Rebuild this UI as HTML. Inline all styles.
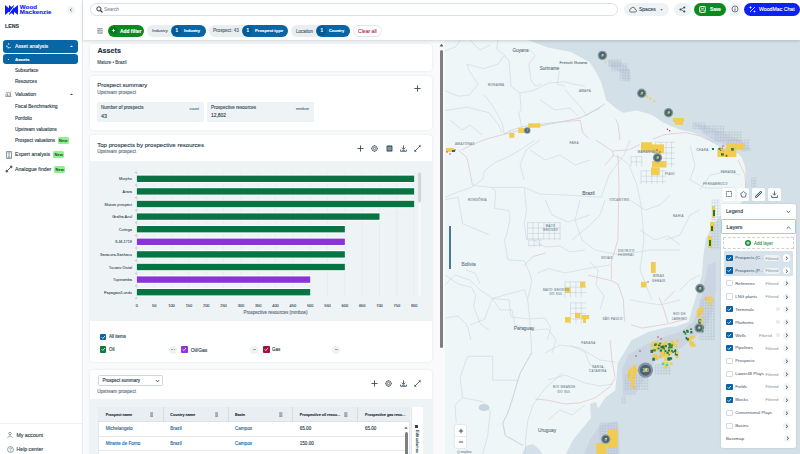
<!DOCTYPE html>
<html><head><meta charset="utf-8">
<style>
*{box-sizing:border-box;margin:0;padding:0}
html,body{width:800px;height:454px;overflow:hidden;background:#fff;font-family:"Liberation Sans",sans-serif;color:#1c3443}
.abs{position:absolute}
#side{position:absolute;left:0;top:0;width:83px;height:454px;background:#fff;border-right:1px solid #e3ebf0}
.t{position:absolute;white-space:nowrap;line-height:1;-webkit-text-stroke:0.12px currentColor}
.nav-main{position:absolute;left:3px;width:75px;height:12.5px;border-radius:3px}
.badge{position:absolute;background:#8ff08f;color:#1d3a2a;font-size:4px;font-weight:bold;border-radius:1.5px;height:7px;line-height:7px;padding:0 1.6px}
#hdr{position:absolute;left:83px;top:0;width:717px;height:40px;background:#fff;box-shadow:0 1px 3px rgba(0,0,0,.16)}
#col{position:absolute;left:83px;top:40px;width:362px;height:414px;background:#f9fafb}
.card{position:absolute;left:89.5px;width:342.5px;background:#fff;border-radius:3.5px;box-shadow:0 0 3px rgba(0,0,0,.09)}
#map{position:absolute;left:445px;top:40px;width:355px;height:414px;background:#eef4f6;overflow:hidden}
</style></head><body>

<div id="side">
  <!-- logo -->
  <svg class="abs" style="left:5px;top:5px" width="13" height="10" viewBox="0 0 13 10">
    <path d="M0 0 L4 3.2 L4 0 L6.5 2 L9 0 L9 3.2 L13 0 L13 10 L9 6.8 L9 10 L6.5 8 L4 10 L4 6.8 L0 10 Z" fill="#0a1dff"/>
    <path d="M3.2 9.5 L9.8 0.5" stroke="#fff" stroke-width="1"/>
  </svg>
  <div class="t" style="left:19.8px;top:3.8px;font-size:6.2px;font-weight:bold;color:#0a1dff;letter-spacing:0.05px">Wood</div><div class="t" style="left:19.8px;top:9.1px;font-size:6.2px;font-weight:bold;color:#0a1dff;letter-spacing:0.1px">Mackenzie</div>
  <div class="abs" style="left:67px;top:6px;width:8px;height:8px;border-radius:50%;background:#f1f4f6"></div>
  <svg class="abs" style="left:69px;top:8px" width="4" height="4" viewBox="0 0 4 4"><path d="M2.6 0.6 L1.2 2 L2.6 3.4" stroke="#34495a" stroke-width="0.8" fill="none"/></svg>
  <div class="t" style="left:5px;top:24.00px;font-size:5.3px;font-weight:bold;color:#2a3a44">LENS</div>

  <div class="nav-main" style="top:40px;background:#0866a6"></div>
  <svg class="abs" style="left:6px;top:43px" width="5" height="6" viewBox="0 0 5 6"><circle cx="2.6" cy="0.9" r="0.7" fill="#fff"/><circle cx="0.9" cy="3.2" r="0.7" fill="#fff"/><circle cx="2.2" cy="4.8" r="0.7" fill="#fff"/><circle cx="4.1" cy="4.6" r="0.7" fill="#fff"/></svg>
  <div class="t" style="left:15px;top:43.6px;font-size:5.2px;color:#fff">Asset analysis</div>
  <svg class="abs" style="left:70px;top:45px" width="3" height="2" viewBox="0 0 3 2"><path d="M0 2 L1.5 0.5 L3 2Z" fill="#fff"/></svg>
  <div class="nav-main" style="top:54px;height:9.5px;background:#0866a6"></div>
  <div class="abs" style="left:8px;top:58.5px;width:1px;height:1px;background:#fff"></div>
  <div class="t" style="left:15px;top:57.50px;font-size:4.4px;font-weight:bold;color:#fff">Assets</div>

  <div class="t" style="left:15px;top:68.80px;font-size:4.6px;color:#2d3e48">Subsurface</div>
  <div class="t" style="left:15px;top:79.50px;font-size:4.6px;color:#2d3e48">Resources</div>
  <svg class="abs" style="left:5px;top:91px" width="7" height="6" viewBox="0 0 7 6"><path d="M0.5 5.5 H6.5 M1 5 V3 M2.5 5 V2.5 M4 5 V3.5 M5.5 5 V2 M0.8 2.5 L3 1 L4.5 2 L6.3 0.5" stroke="#4d606c" stroke-width="0.6" fill="none"/></svg>
  <div class="t" style="left:15px;top:92.00px;font-size:5.2px;color:#2d3e48">Valuation</div>
  <svg class="abs" style="left:70px;top:93px" width="3" height="2" viewBox="0 0 3 2"><path d="M0 2 L1.5 0.5 L3 2Z" fill="#3a4a55"/></svg>
  <div class="t" style="left:15px;top:105.30px;font-size:4.6px;color:#2d3e48">Fiscal Benchmarking</div>
  <div class="t" style="left:15px;top:117.00px;font-size:4.6px;color:#2d3e48">Portfolio</div>
  <div class="t" style="left:15px;top:128.20px;font-size:4.6px;color:#2d3e48">Upstream valuations</div>
  <div class="t" style="left:15px;top:138.80px;font-size:4.6px;color:#2d3e48">Prospect valuations</div>
  <div class="badge" style="left:57.5px;top:137px">New</div>
  <svg class="abs" style="left:6px;top:151px" width="6" height="8" viewBox="0 0 6 8"><rect x="0.4" y="0.4" width="5.2" height="7.2" rx="0.6" stroke="#4d606c" stroke-width="0.7" fill="none"/><path d="M1.4 1.8 H4.6 M3 2.2 V6.6 M1.4 6.2 H4.6" stroke="#4d606c" stroke-width="0.6"/></svg>
  <div class="t" style="left:15px;top:151.6px;font-size:5.2px;color:#2d3e48">Expert analysis</div>
  <div class="badge" style="left:53px;top:151px">New</div>
  <svg class="abs" style="left:5px;top:164.5px" width="8" height="8" viewBox="0 0 8 8"><path d="M2 6 L6 2" stroke="#4d606c" stroke-width="0.9"/><path d="M1.8 4.6 L3.4 6.2 L1.8 7.8 L0.2 6.2Z M6.2 0.2 L7.8 1.8 L6.2 3.4 L4.6 1.8Z" fill="#4d606c"/></svg>
  <div class="t" style="left:15px;top:166.50px;font-size:5.2px;color:#2d3e48">Analogue finder</div>
  <div class="badge" style="left:54px;top:165.5px">New</div>

  <div class="abs" style="left:0;top:422.5px;width:82px;height:1px;background:#eef1f3"></div>
  <svg class="abs" style="left:7px;top:432px" width="6" height="6" viewBox="0 0 6 6"><circle cx="3" cy="1.6" r="1.2" stroke="#4d606c" stroke-width="0.6" fill="none"/><path d="M0.5 5.8 Q3 2 5.5 5.8" stroke="#4d606c" stroke-width="0.6" fill="none"/></svg>
  <div class="t" style="left:16.5px;top:432.60px;font-size:5.2px;color:#2d3e48">My account</div>
  <svg class="abs" style="left:6.5px;top:446px" width="7" height="7" viewBox="0 0 7 7"><circle cx="3.5" cy="3.5" r="2.9" stroke="#4d606c" stroke-width="0.6" fill="none"/><path d="M2.5 2.6 Q3.5 1.5 4.5 2.6 Q4.5 3.3 3.5 3.8 V4.4 M3.5 5.2 V5.6" stroke="#4d606c" stroke-width="0.6" fill="none"/></svg>
  <div class="t" style="left:16.5px;top:446.60px;font-size:5.2px;color:#2d3e48">Help center</div>
</div>

<div id="col"></div>
<div id="content">
  <div class="card" style="top:43.7px;height:27px"></div>
  <div class="t" style="left:97.4px;top:47.20px;font-size:7.2px;font-weight:bold;color:#162f3e">Assets</div>
  <div class="t" style="left:97.2px;top:60.50px;font-size:4.5px;color:#3a4d59">Mature • Brazil</div>

  <div class="card" style="top:75.6px;height:54.4px"></div>
  <div class="t" style="left:97.2px;top:81.5px;font-size:6px;color:#253b49">Prospect summary</div>
  <div class="t" style="left:97.2px;top:90.50px;font-size:4.6px;color:#5e7482">Upstream prospect</div>
  <svg class="abs" style="left:414px;top:85px" width="7" height="7" viewBox="0 0 7 7"><path d="M3.5 0.3 V6.7 M0.3 3.5 H6.7" stroke="#23394a" stroke-width="0.8"/></svg>
  <div class="abs" style="left:97.2px;top:101.7px;width:107px;height:20px;background:#eef3f6;border-radius:1px"></div>
  <div class="t" style="left:101px;top:105.80px;font-size:4.6px;color:#3a4d59">Number of prospects</div>
  <div class="t" style="left:189.5px;top:106.50px;font-size:3.9px;color:#5e7482">count</div>
  <div class="t" style="left:101px;top:113.50px;font-size:5.4px;color:#253b49">43</div>
  <div class="abs" style="left:207px;top:101.7px;width:106.6px;height:20px;background:#eef3f6;border-radius:1px"></div>
  <div class="t" style="left:211px;top:105.80px;font-size:4.55px;color:#3a4d59">Prospective resources</div>
  <div class="t" style="left:296px;top:106.50px;font-size:3.9px;color:#5e7482">mmboe</div>
  <div class="t" style="left:211px;top:113.50px;font-size:4.9px;color:#253b49">12,802</div>

  <div class="card" style="top:135.3px;height:227px;overflow:hidden">
    <div class="abs" style="left:0;top:25.7px;width:100%;height:160.3px;background:#eef3f6"></div>
  </div>
  <div class="t" style="left:97.2px;top:142.20px;font-size:6.07px;color:#253b49">Top prospects by prospective resources</div>
  <div class="t" style="left:97.2px;top:150.30px;font-size:4.6px;color:#5e7482">Upstream prospect</div>
  <svg class="abs" style="left:356.90px;top:144.70px" width="7" height="7" viewBox="0 0 7 7"><path d="M3.5 0.4 V6.6 M0.4 3.5 H6.6" stroke="#2d4556" stroke-width="0.85"/></svg>
<svg class="abs" style="left:371.00px;top:144.70px" width="7" height="7" viewBox="0 0 7 7"><circle cx="3.5" cy="3.5" r="2.7" stroke="#2d4556" stroke-width="0.8" fill="none"/><circle cx="3.5" cy="3.5" r="1.2" stroke="#2d4556" stroke-width="0.7" fill="none"/><path d="M3.5 0 V0.9 M3.5 6.1 V7 M0 3.5 H0.9 M6.1 3.5 H7" stroke="#2d4556" stroke-width="0.6"/></svg>
<svg class="abs" style="left:385.70px;top:144.70px" width="7" height="7" viewBox="0 0 7 7"><rect x="0.6" y="0.5" width="5.8" height="6" rx="0.5" fill="#2d4556"/><rect x="1.4" y="1.6" width="4.2" height="3.9" fill="#8495a0"/></svg>
<svg class="abs" style="left:399.60px;top:144.70px" width="7" height="7" viewBox="0 0 7 7"><path d="M3.5 0.3 V4" stroke="#2d4556" stroke-width="0.8"/><path d="M1.8 2.6 L3.5 4.4 L5.2 2.6" stroke="#2d4556" stroke-width="0.8" fill="none"/><path d="M0.6 4.6 V6.3 H6.4 V4.6" stroke="#2d4556" stroke-width="0.8" fill="none"/><path d="M2 5.3 H5" stroke="#2d4556" stroke-width="0.7"/></svg>
<svg class="abs" style="left:414.00px;top:144.70px" width="7" height="7" viewBox="0 0 7 7"><path d="M1 6 L6 1" stroke="#2d4556" stroke-width="0.8"/><path d="M0.3 6.7 L0.6 4.4 L2.6 6.4Z M6.7 0.3 L6.4 2.6 L4.4 0.6Z" fill="#2d4556"/></svg>
  <svg class="abs" style="left:0;top:0" width="800" height="454" viewBox="0 0 800 454">
<path d="M136.90 172 V297.5" stroke="#dfe5e9" stroke-width="0.5"/>
<path d="M154.23 172 V297.5" stroke="#dfe5e9" stroke-width="0.5"/>
<path d="M171.56 172 V297.5" stroke="#dfe5e9" stroke-width="0.5"/>
<path d="M188.89 172 V297.5" stroke="#dfe5e9" stroke-width="0.5"/>
<path d="M206.22 172 V297.5" stroke="#dfe5e9" stroke-width="0.5"/>
<path d="M223.55 172 V297.5" stroke="#dfe5e9" stroke-width="0.5"/>
<path d="M240.88 172 V297.5" stroke="#dfe5e9" stroke-width="0.5"/>
<path d="M258.21 172 V297.5" stroke="#dfe5e9" stroke-width="0.5"/>
<path d="M275.54 172 V297.5" stroke="#dfe5e9" stroke-width="0.5"/>
<path d="M292.87 172 V297.5" stroke="#dfe5e9" stroke-width="0.5"/>
<path d="M310.20 172 V297.5" stroke="#dfe5e9" stroke-width="0.5"/>
<path d="M327.53 172 V297.5" stroke="#dfe5e9" stroke-width="0.5"/>
<path d="M344.86 172 V297.5" stroke="#dfe5e9" stroke-width="0.5"/>
<path d="M362.19 172 V297.5" stroke="#dfe5e9" stroke-width="0.5"/>
<path d="M379.52 172 V297.5" stroke="#dfe5e9" stroke-width="0.5"/>
<path d="M396.85 172 V297.5" stroke="#dfe5e9" stroke-width="0.5"/>
<path d="M414.18 172 V297.5" stroke="#dfe5e9" stroke-width="0.5"/>
<path d="M135 172.40 H137" stroke="#8a969e" stroke-width="0.5"/>
<path d="M135 185.00 H137" stroke="#8a969e" stroke-width="0.5"/>
<path d="M135 197.60 H137" stroke="#8a969e" stroke-width="0.5"/>
<path d="M135 210.20 H137" stroke="#8a969e" stroke-width="0.5"/>
<path d="M135 222.80 H137" stroke="#8a969e" stroke-width="0.5"/>
<path d="M135 235.40 H137" stroke="#8a969e" stroke-width="0.5"/>
<path d="M135 248.00 H137" stroke="#8a969e" stroke-width="0.5"/>
<path d="M135 260.60 H137" stroke="#8a969e" stroke-width="0.5"/>
<path d="M135 273.20 H137" stroke="#8a969e" stroke-width="0.5"/>
<path d="M135 285.80 H137" stroke="#8a969e" stroke-width="0.5"/>
<path d="M135 298.40 H137" stroke="#8a969e" stroke-width="0.5"/>
<path d="M136.9 172 V298" stroke="#c9d2d8" stroke-width="0.5"/>
<rect x="136.5" y="174.60" width="278.08" height="8.4" fill="#fff"/>
<rect x="136.9" y="175.60" width="277.28" height="6.4" fill="#087443"/>
<rect x="136.5" y="187.20" width="278.08" height="8.4" fill="#fff"/>
<rect x="136.9" y="188.20" width="277.28" height="6.4" fill="#087443"/>
<rect x="136.5" y="199.80" width="278.08" height="8.4" fill="#fff"/>
<rect x="136.9" y="200.80" width="277.28" height="6.4" fill="#087443"/>
<rect x="136.5" y="212.40" width="243.42" height="8.4" fill="#fff"/>
<rect x="136.9" y="213.40" width="242.62" height="6.4" fill="#087443"/>
<rect x="136.5" y="225.00" width="208.76" height="8.4" fill="#fff"/>
<rect x="136.9" y="226.00" width="207.96" height="6.4" fill="#087443"/>
<rect x="136.5" y="237.60" width="208.76" height="8.4" fill="#fff"/>
<rect x="136.9" y="238.60" width="207.96" height="6.4" fill="#8a34d8"/>
<rect x="136.5" y="250.20" width="208.76" height="8.4" fill="#fff"/>
<rect x="136.9" y="251.20" width="207.96" height="6.4" fill="#087443"/>
<rect x="136.5" y="262.80" width="208.76" height="8.4" fill="#fff"/>
<rect x="136.9" y="263.80" width="207.96" height="6.4" fill="#087443"/>
<rect x="136.5" y="275.40" width="174.10" height="8.4" fill="#fff"/>
<rect x="136.9" y="276.40" width="173.30" height="6.4" fill="#8a34d8"/>
<rect x="136.5" y="288.00" width="174.10" height="8.4" fill="#fff"/>
<rect x="136.9" y="289.00" width="173.30" height="6.4" fill="#087443"/>
<rect x="417.6" y="172" width="4.2" height="125.8" rx="2" fill="#f6f8f9" stroke="#e1e6e9" stroke-width="0.4"/>
<rect x="418.2" y="172.5" width="2.8" height="30" rx="1.4" fill="#cfd4d7"/>
</svg>
<div class="t" style="right:668px;top:178.40px;font-size:3.85px;color:#2b3f4c;-webkit-text-stroke:0.05px">Morpho</div>
<div class="t" style="right:668px;top:191.00px;font-size:3.85px;color:#2b3f4c;-webkit-text-stroke:0.05px">Arara</div>
<div class="t" style="right:668px;top:203.60px;font-size:3.85px;color:#2b3f4c;-webkit-text-stroke:0.05px">Mutum prospect</div>
<div class="t" style="right:668px;top:216.20px;font-size:3.85px;color:#2b3f4c;-webkit-text-stroke:0.05px">Gralha Azul</div>
<div class="t" style="right:668px;top:228.80px;font-size:3.85px;color:#2b3f4c;-webkit-text-stroke:0.05px">Cotinga</div>
<div class="t" style="right:668px;top:241.40px;font-size:3.85px;color:#2b3f4c;-webkit-text-stroke:0.05px">S-M-1719</div>
<div class="t" style="right:668px;top:254.00px;font-size:3.85px;color:#2b3f4c;-webkit-text-stroke:0.05px">Saracura-Sanhacu</div>
<div class="t" style="right:668px;top:266.60px;font-size:3.85px;color:#2b3f4c;-webkit-text-stroke:0.05px">Tucano Distal</div>
<div class="t" style="right:668px;top:279.20px;font-size:3.85px;color:#2b3f4c;-webkit-text-stroke:0.05px">Tupinamba</div>
<div class="t" style="right:668px;top:291.80px;font-size:3.85px;color:#2b3f4c;-webkit-text-stroke:0.05px">Papagaio/Lundu</div>
<div class="t" style="left:126.90px;width:20px;text-align:center;top:303.5px;font-size:3.9px;color:#3f525e">0</div>
<div class="t" style="left:144.23px;width:20px;text-align:center;top:303.5px;font-size:3.9px;color:#3f525e">50</div>
<div class="t" style="left:161.56px;width:20px;text-align:center;top:303.5px;font-size:3.9px;color:#3f525e">100</div>
<div class="t" style="left:178.89px;width:20px;text-align:center;top:303.5px;font-size:3.9px;color:#3f525e">150</div>
<div class="t" style="left:196.22px;width:20px;text-align:center;top:303.5px;font-size:3.9px;color:#3f525e">200</div>
<div class="t" style="left:213.55px;width:20px;text-align:center;top:303.5px;font-size:3.9px;color:#3f525e">250</div>
<div class="t" style="left:230.88px;width:20px;text-align:center;top:303.5px;font-size:3.9px;color:#3f525e">300</div>
<div class="t" style="left:248.21px;width:20px;text-align:center;top:303.5px;font-size:3.9px;color:#3f525e">350</div>
<div class="t" style="left:265.54px;width:20px;text-align:center;top:303.5px;font-size:3.9px;color:#3f525e">400</div>
<div class="t" style="left:282.87px;width:20px;text-align:center;top:303.5px;font-size:3.9px;color:#3f525e">450</div>
<div class="t" style="left:300.20px;width:20px;text-align:center;top:303.5px;font-size:3.9px;color:#3f525e">500</div>
<div class="t" style="left:317.53px;width:20px;text-align:center;top:303.5px;font-size:3.9px;color:#3f525e">550</div>
<div class="t" style="left:334.86px;width:20px;text-align:center;top:303.5px;font-size:3.9px;color:#3f525e">600</div>
<div class="t" style="left:352.19px;width:20px;text-align:center;top:303.5px;font-size:3.9px;color:#3f525e">650</div>
<div class="t" style="left:369.52px;width:20px;text-align:center;top:303.5px;font-size:3.9px;color:#3f525e">700</div>
<div class="t" style="left:386.85px;width:20px;text-align:center;top:303.5px;font-size:3.9px;color:#3f525e">750</div>
<div class="t" style="left:404.18px;width:20px;text-align:center;top:303.5px;font-size:3.9px;color:#3f525e">800</div>
<div class="t" style="left:235px;width:81px;text-align:center;top:311.00px;font-size:4.5px;color:#5b6e7a">Prospective resources (mmboe)</div>
  <div class="abs" style="left:99.8px;top:333.5px;width:6.6px;height:6.4px;border-radius:1px;background:#0a63a8"></div><svg class="abs" style="left:99.8px;top:333.5px" width="6.6" height="6.4" viewBox="0 0 6.6 6.4"><path d="M1.6 3.3 L2.8 4.5 L5 2" stroke="#fff" stroke-width="0.8" fill="none"/></svg>
<div class="t" style="left:108.9px;top:335.00px;font-size:4.5px;color:#253b49">All items</div>
<div class="abs" style="left:99.8px;top:346.2px;width:6.6px;height:6.4px;border-radius:1px;background:#0b7a3e"></div><svg class="abs" style="left:99.8px;top:346.2px" width="6.6" height="6.4" viewBox="0 0 6.6 6.4"><path d="M1.6 3.3 L2.8 4.5 L5 2" stroke="#fff" stroke-width="0.8" fill="none"/></svg>
<div class="t" style="left:108.9px;top:348.20px;font-size:4.5px;color:#253b49">Oil</div>
<div class="abs" style="left:168.6px;top:345.5px;width:8px;height:8px;border-radius:50%;background:#eef2f4"></div><div class="abs" style="left:170.95px;top:349.15px;width:0.7px;height:0.7px;border-radius:50%;background:#8d99a2"></div><div class="abs" style="left:172.25px;top:349.15px;width:0.7px;height:0.7px;border-radius:50%;background:#8d99a2"></div><div class="abs" style="left:173.55px;top:349.15px;width:0.7px;height:0.7px;border-radius:50%;background:#8d99a2"></div>
<div class="abs" style="left:181.4px;top:346.2px;width:6.6px;height:6.4px;border-radius:1px;background:#8f35e0"></div><svg class="abs" style="left:181.4px;top:346.2px" width="6.6" height="6.4" viewBox="0 0 6.6 6.4"><path d="M1.6 3.3 L2.8 4.5 L5 2" stroke="#fff" stroke-width="0.8" fill="none"/></svg>
<div class="t" style="left:190.7px;top:348.20px;font-size:5px;color:#253b49">Oil/Gas</div>
<div class="abs" style="left:250.4px;top:345.5px;width:8px;height:8px;border-radius:50%;background:#eef2f4"></div><div class="abs" style="left:252.75px;top:349.15px;width:0.7px;height:0.7px;border-radius:50%;background:#8d99a2"></div><div class="abs" style="left:254.05px;top:349.15px;width:0.7px;height:0.7px;border-radius:50%;background:#8d99a2"></div><div class="abs" style="left:255.35px;top:349.15px;width:0.7px;height:0.7px;border-radius:50%;background:#8d99a2"></div>
<div class="abs" style="left:263px;top:346.2px;width:6.6px;height:6.4px;border-radius:1px;background:#a3123a"></div><svg class="abs" style="left:263px;top:346.2px" width="6.6" height="6.4" viewBox="0 0 6.6 6.4"><path d="M1.6 3.3 L2.8 4.5 L5 2" stroke="#fff" stroke-width="0.8" fill="none"/></svg>
<div class="t" style="left:272px;top:348.20px;font-size:4.5px;color:#253b49">Gas</div>
<div class="abs" style="left:332.3px;top:345.5px;width:8px;height:8px;border-radius:50%;background:#eef2f4"></div><div class="abs" style="left:334.65px;top:349.15px;width:0.7px;height:0.7px;border-radius:50%;background:#8d99a2"></div><div class="abs" style="left:335.95px;top:349.15px;width:0.7px;height:0.7px;border-radius:50%;background:#8d99a2"></div><div class="abs" style="left:337.25px;top:349.15px;width:0.7px;height:0.7px;border-radius:50%;background:#8d99a2"></div>

  <div class="card" style="top:369.6px;height:100px;overflow:hidden">
    <div class="abs" style="left:0;top:29.6px;width:100%;height:80px;background:#eef3f6"></div>
  </div>
  <div class="abs" style="left:97.6px;top:374.7px;width:65px;height:11.3px;border:0.6px solid #cdd7dd;border-radius:1.5px;background:#fff"></div>
<div class="t" style="left:102.5px;top:379px;font-size:4.5px;color:#253b49">Prospect summary</div>
<svg class="abs" style="left:154.5px;top:378.8px" width="5" height="4" viewBox="0 0 5 4"><path d="M0.8 1 L2.5 2.8 L4.2 1" stroke="#253b49" stroke-width="0.8" fill="none"/></svg>
<div class="t" style="left:97.2px;top:389.60px;font-size:4.6px;color:#5e7482">Upstream prospect</div>
<svg class="abs" style="left:371.20px;top:380.30px" width="7" height="7" viewBox="0 0 7 7"><path d="M3.5 0.4 V6.6 M0.4 3.5 H6.6" stroke="#2d4556" stroke-width="0.85"/></svg>
<svg class="abs" style="left:385.40px;top:380.30px" width="7" height="7" viewBox="0 0 7 7"><circle cx="3.5" cy="3.5" r="2.7" stroke="#2d4556" stroke-width="0.8" fill="none"/><circle cx="3.5" cy="3.5" r="1.2" stroke="#2d4556" stroke-width="0.7" fill="none"/><path d="M3.5 0 V0.9 M3.5 6.1 V7 M0 3.5 H0.9 M6.1 3.5 H7" stroke="#2d4556" stroke-width="0.6"/></svg>
<svg class="abs" style="left:399.50px;top:380.30px" width="7" height="7" viewBox="0 0 7 7"><path d="M3.5 0.3 V4" stroke="#2d4556" stroke-width="0.8"/><path d="M1.8 2.6 L3.5 4.4 L5.2 2.6" stroke="#2d4556" stroke-width="0.8" fill="none"/><path d="M0.6 4.6 V6.3 H6.4 V4.6" stroke="#2d4556" stroke-width="0.8" fill="none"/><path d="M2 5.3 H5" stroke="#2d4556" stroke-width="0.7"/></svg>
<svg class="abs" style="left:413.80px;top:380.30px" width="7" height="7" viewBox="0 0 7 7"><path d="M1 6 L6 1" stroke="#2d4556" stroke-width="0.8"/><path d="M0.3 6.7 L0.6 4.4 L2.6 6.4Z M6.7 0.3 L6.4 2.6 L4.4 0.6Z" fill="#2d4556"/></svg>
<div class="abs" style="left:97.6px;top:407px;width:312.4px;height:50px;background:#fff;border:0.5px solid #e1e8ec"></div>
<div class="abs" style="left:97.6px;top:407px;width:312.4px;height:15px;background:#e8eef1;border-bottom:0.5px solid #dbe3e8"></div>
<div class="abs" style="left:162.5px;top:407px;width:0.5px;height:15px;background:#d5dee3"></div>
<div class="abs" style="left:227.6px;top:407px;width:0.5px;height:15px;background:#d5dee3"></div>
<div class="abs" style="left:292px;top:407px;width:0.5px;height:15px;background:#d5dee3"></div>
<div class="abs" style="left:356.6px;top:407px;width:0.5px;height:15px;background:#d5dee3"></div>
<div class="abs" style="left:97.6px;top:435.9px;width:307px;height:0.6px;background:#e3e9ed"></div>
<div class="abs" style="left:97.6px;top:450.2px;width:307px;height:0.6px;background:#e3e9ed"></div>
<div class="t" style="left:105.7px;top:413.50px;font-size:3.7px;font-weight:bold;color:#1d3240">Prospect name</div>
<svg class="abs" style="left:149.7px;top:412px" width="3.6" height="5" viewBox="0 0 3.6 5"><path d="M0.2 0.8 H3.4 M0.2 2.0 H3.4 M0.2 3.2 H3.4 M0.2 4.4 H3.4" stroke="#3d5260" stroke-width="0.55"/></svg>
<div class="t" style="left:170.3px;top:413.50px;font-size:3.7px;font-weight:bold;color:#1d3240">Country name</div>
<svg class="abs" style="left:214.5px;top:412px" width="3.6" height="5" viewBox="0 0 3.6 5"><path d="M0.2 0.8 H3.4 M0.2 2.0 H3.4 M0.2 3.2 H3.4 M0.2 4.4 H3.4" stroke="#3d5260" stroke-width="0.55"/></svg>
<div class="t" style="left:235px;top:413.50px;font-size:3.7px;font-weight:bold;color:#1d3240">Basin</div>
<svg class="abs" style="left:279.2px;top:412px" width="3.6" height="5" viewBox="0 0 3.6 5"><path d="M0.2 0.8 H3.4 M0.2 2.0 H3.4 M0.2 3.2 H3.4 M0.2 4.4 H3.4" stroke="#3d5260" stroke-width="0.55"/></svg>
<div class="t" style="left:299.8px;top:413.50px;font-size:3.7px;font-weight:bold;color:#1d3240">Prospective oil resou...</div>
<svg class="abs" style="left:344.09999999999997px;top:412px" width="3.6" height="5" viewBox="0 0 3.6 5"><path d="M0.2 0.8 H3.4 M0.2 2.0 H3.4 M0.2 3.2 H3.4 M0.2 4.4 H3.4" stroke="#3d5260" stroke-width="0.55"/></svg>
<div class="t" style="left:365px;top:413.50px;font-size:3.7px;font-weight:bold;color:#1d3240">Prospective gas reso...</div>
<div class="t" style="left:105.7px;top:427.30px;font-size:4.55px;color:#1c6aa6">Michelangelo</div>
<div class="t" style="left:170.3px;top:427.30px;font-size:4.55px;color:#1c6aa6">Brazil</div>
<div class="t" style="left:235px;top:427.30px;font-size:4.55px;color:#1c6aa6">Campos</div>
<div class="t" style="left:299.8px;top:427.30px;font-size:4.55px;color:#253b49">65.00</div>
<div class="t" style="left:365px;top:427.30px;font-size:4.55px;color:#253b49">65.00</div>
<div class="t" style="left:105.7px;top:441.50px;font-size:4.55px;color:#1c6aa6">Mirante de Forno</div>
<div class="t" style="left:170.3px;top:441.50px;font-size:4.55px;color:#1c6aa6">Brazil</div>
<div class="t" style="left:235px;top:441.50px;font-size:4.55px;color:#1c6aa6">Campos</div>
<div class="t" style="left:299.8px;top:441.50px;font-size:4.55px;color:#253b49">150.00</div>
<div class="t" style="left:365px;top:441.0px;font-size:4.3px;color:#253b49"></div>
<div class="abs" style="left:404.8px;top:432px;width:3.2px;height:30px;border-radius:1.6px;background:#7d7f80"></div>
<svg class="abs" style="left:404.4px;top:425.5px" width="4" height="3" viewBox="0 0 4 3"><path d="M0.3 2.7 L2 0.4 L3.7 2.7Z" fill="#5f6163"/></svg>
<div class="abs" style="left:411px;top:407px;width:12px;height:50px;background:#fff;border-left:0.5px solid #e1e8ec"></div>
<div class="abs" style="left:415px;top:425px;width:3px;height:3px;background:#2d4556"></div>
<div class="t" style="left:419px;top:430px;font-size:4px;color:#253b49;transform-origin:0 0;transform:rotate(90deg)">Edit columns</div>

  <div class="abs" style="left:439.5px;top:50px;width:3.6px;height:297.5px;border-radius:2px;background:#7d7f80"></div>
  <svg class="abs" style="left:439px;top:43px" width="5" height="4" viewBox="0 0 5 4"><path d="M0.5 3.5 L2.5 0.8 L4.5 3.5Z" fill="#5f6163"/></svg>
</div>
<div id="map">
<svg width="355" height="414" viewBox="445 40 355 414" style="position:absolute;left:0;top:0">
<rect x="445" y="40" width="355" height="414" fill="#eef6f8"/>
<path d="M528.0 40.0 L548.0 47.5 L571.0 52.0 L582.0 58.0 L590.0 62.5 L596.0 72.0 L601.0 82.0 L604.0 92.0 L606.0 100.0 L612.0 105.0 L618.0 110.0 L623.5 112.8 L637.0 110.5 L652.0 115.0 L663.0 122.5 L680.0 129.7 L691.0 132.0 L702.0 136.3 L713.0 143.0 L724.0 149.6 L737.3 152.9 L741.7 157.3 L745.0 166.0 L746.0 177.0 L745.0 188.0 L743.9 200.0 L737.0 207.0 L722.0 214.0 L713.0 225.0 L706.0 238.0 L703.5 255.0 L702.5 268.0 L701.5 276.0 L699.4 284.0 L696.0 297.0 L691.7 310.5 L688.8 322.0 L676.0 326.5 L665.8 327.6 L648.2 332.0 L635.9 338.2 L631.6 340.0 L622.8 355.0 L617.8 362.6 L616.5 377.7 L615.3 390.3 L605.2 397.8 L595.2 412.9 L582.6 428.0 L572.5 440.5 L566.0 454.0 L800.0 454.0 L800.0 40.0Z" fill="#d3e0e7"/>
<path d="M623.0 395.0 L622.0 370.0 L628.0 355.0 L645.0 345.0 L660.0 338.0 L680.0 332.0 L693.0 322.0 L700.0 305.0 L704.0 285.0 L708.0 265.0 L716.0 262.0 L716.0 290.0 L713.0 310.0 L706.0 326.0 L692.0 340.0 L672.0 354.0 L655.0 361.0 L645.0 378.0 L635.0 395.0Z" fill="#c9d2e1" opacity="0.8"/>
<path d="M584.0 454.0 L590.0 440.0 L600.0 425.0 L618.0 421.0 L620.0 454.0Z" fill="#c9d2e1" opacity="0.8"/>
<path d="M693.0 123.0 L706.0 126.0 L742.0 141.0 L752.0 150.0 L744.0 152.0 L712.0 140.0 L700.0 130.0Z" fill="#c9d2e1" opacity="0.8"/>
<path d="M607.0 60.0 L620.0 61.0 L630.0 70.0 L631.0 82.0 L623.0 81.0 L621.0 72.0 L609.0 66.0Z" fill="#c9d2e1" opacity="0.8"/>
<path d="M522.0 454.0 L526.0 446.0 L533.0 444.0 L540.0 450.0 L542.0 454.0Z" fill="#d3e0e7"/>
<path d="M590.0 404.0 L596.0 402.0 L599.0 412.0 L596.0 423.0 L591.0 418.0Z" fill="#d3e0e7"/>
<ellipse cx="484" cy="407.5" rx="5.5" ry="3.5" fill="#c9d5dd"/>
<path d="M497.9 40.0 L496.8 48.8 L504.5 55.4 L508.9 60.9 L510.0 73.0 L511.0 86.3 L519.9 92.9 L533.0 90.7 L548.5 83.0 L565.0 81.8 L573.0 84.0 L585.0 86.0" stroke="#c4d4dc" stroke-width="0.55" fill="none"/>
<path d="M445.0 90.7 L458.2 96.2 L469.2 95.0 L478.0 84.0 L469.2 70.8 L467.0 64.2 L483.5 68.6 L497.9 64.2 L504.5 55.4" stroke="#c4d4dc" stroke-width="0.55" fill="none"/>
<path d="M445.0 51.0 L456.0 46.6 L460.4 40.0" stroke="#c4d4dc" stroke-width="0.55" fill="none"/>
<path d="M528.7 48.8 L535.3 55.4 L528.7 64.2 L530.9 79.6 L535.3 86.3 L541.9 84.0" stroke="#c4d4dc" stroke-width="0.55" fill="none"/>
<path d="M559.5 70.8 L557.3 84.0 L565.0 86.3" stroke="#c4d4dc" stroke-width="0.55" fill="none"/>
<path d="M519.9 92.9 L521.0 110.5 L518.6 112.7 L522.0 128.0" stroke="#c4d4dc" stroke-width="0.55" fill="none"/>
<path d="M484.6 95.0 L491.3 103.9 L496.8 112.7 L502.3 123.7 L504.5 134.7" stroke="#c4d4dc" stroke-width="0.55" fill="none"/>
<path d="M445.0 110.5 L467.0 107.2 L489.0 112.7 L497.9 123.7 L502.3 132.5" stroke="#c4d4dc" stroke-width="0.55" fill="none"/>
<path d="M565.0 89.6 L573.8 99.5 L581.5 108.3 L587.0 116.0" stroke="#c4d4dc" stroke-width="0.55" fill="none"/>
<path d="M445.0 197.3 L458.2 191.8 L471.4 187.4 L482.4 179.6 L484.6 170.8 L495.7 162.0 L506.7 157.6 L520.0 150.0 L535.0 140.0" stroke="#c4d4dc" stroke-width="0.55" fill="none"/>
<path d="M472.5 185.2 L491.3 187.4 L524.3 187.4 L539.7 194.0 L565.0 195.0 L601.3 197.3" stroke="#c4d4dc" stroke-width="0.55" fill="none"/>
<path d="M491.3 187.4 L495.7 190.7 L494.6 208.3 L508.9 210.5 L510.0 219.3 L506.7 234.7 L504.5 240.0 L507.8 259.8 L524.3 260.9 L528.7 270.8 L532.0 280.7 L527.6 299.5 L529.8 319.3 L531.7 352.6 L520.4 372.7 L517.9 380.2 L512.8 397.8 L507.8 412.9 L502.8 422.9 L505.3 435.5 L522.9 445.5" stroke="#c4d4dc" stroke-width="0.55" fill="none"/>
<path d="M524.3 187.4 L526.5 210.5 L524.3 223.7 L526.5 240.0" stroke="#c4d4dc" stroke-width="0.55" fill="none"/>
<path d="M445.0 199.5 L458.2 197.3 L460.4 210.5 L462.6 223.7 L489.0 234.7" stroke="#c4d4dc" stroke-width="0.55" fill="none"/>
<path d="M524.3 180.0 L520.0 165.0 L526.0 150.0 L540.0 140.0" stroke="#c4d4dc" stroke-width="0.55" fill="none"/>
<path d="M601.3 197.3 L609.0 175.0 L624.0 155.0 L630.0 140.0" stroke="#c4d4dc" stroke-width="0.55" fill="none"/>
<path d="M612.0 155.0 L621.0 158.0 L629.0 165.0 L637.0 185.0 L641.0 205.0 L644.0 240.0 L640.0 270.0 L652.0 300.0" stroke="#c4d4dc" stroke-width="0.55" fill="none"/>
<path d="M492.4 298.4 L524.3 289.6 L527.6 299.5" stroke="#c4d4dc" stroke-width="0.55" fill="none"/>
<path d="M492.4 298.4 L484.6 319.3 L470.0 325.0" stroke="#c4d4dc" stroke-width="0.55" fill="none"/>
<path d="M537.5 273.0 L548.5 268.6 L565.0 273.0 L590.0 268.0 L610.0 265.0" stroke="#c4d4dc" stroke-width="0.55" fill="none"/>
<path d="M467.6 356.3 L492.7 356.3 L492.7 380.2 L517.9 380.2" stroke="#c4d4dc" stroke-width="0.55" fill="none"/>
<path d="M467.6 356.3 L460.0 377.7 L462.6 397.8 L455.0 405.3 L456.3 422.9" stroke="#c4d4dc" stroke-width="0.55" fill="none"/>
<path d="M462.6 397.8 L482.7 401.6 L490.2 411.6 L487.7 435.5 L482.7 454.0" stroke="#c4d4dc" stroke-width="0.55" fill="none"/>
<path d="M563.0 372.7 L545.5 387.7 L532.9 405.3 L527.9 420.4 L525.4 440.5 L525.4 454.0" stroke="#c4d4dc" stroke-width="0.55" fill="none"/>
<path d="M492.0 298.0 L500.0 310.0 L512.0 310.0 L515.0 325.0 L533.0 330.0 L548.0 329.0 L556.0 340.0 L552.0 353.0" stroke="#c4d4dc" stroke-width="0.55" fill="none"/>
<path d="M545.0 353.0 L560.0 345.0 L580.0 348.0 L600.0 360.0 L615.0 362.0" stroke="#c4d4dc" stroke-width="0.55" fill="none"/>
<path d="M548.0 380.0 L565.0 375.0 L585.0 383.0 L600.0 386.0 L612.0 384.0" stroke="#c4d4dc" stroke-width="0.55" fill="none"/>
<path d="M445.0 285.0 L455.0 275.0 L470.0 280.0 L480.0 290.0 L492.0 298.0" stroke="#c4d4dc" stroke-width="0.55" fill="none"/>
<path d="M665.0 240.0 L680.0 235.0 L690.0 215.0 L700.0 210.0" stroke="#c4d4dc" stroke-width="0.55" fill="none"/>
<path d="M572.0 240.0 L590.0 225.0 L600.0 215.0 L605.0 200.0" stroke="#c4d4dc" stroke-width="0.55" fill="none"/>
<path d="M680.0 290.0 L690.0 280.0 L700.0 275.0" stroke="#c4d4dc" stroke-width="0.55" fill="none"/>
<path d="M580.0 200.0 L575.0 220.0 L582.0 240.0 L595.0 250.0 L620.0 255.0 L650.0 250.0 L680.0 250.0" stroke="#c4d4dc" stroke-width="0.55" fill="none"/>
<path d="M700.0 190.0 L710.0 175.0 L725.0 172.0 L740.0 175.0" stroke="#c4d4dc" stroke-width="0.55" fill="none"/>
<path d="M690.0 145.0 L695.0 165.0 L690.0 180.0 L705.0 188.0 L735.0 188.0" stroke="#c4d4dc" stroke-width="0.55" fill="none"/>
<path d="M630.0 300.0 L660.0 305.0 L680.0 300.0" stroke="#c4d4dc" stroke-width="0.55" fill="none"/>
<path d="M445.0 275.2 L458.2 284.0 L471.4 287.4 L475.8 295.0 L473.6 306.0 L480.2 323.7 L489.0 330.3" stroke="#c4d4dc" stroke-width="0.55" fill="none"/>
<path d="M492.4 298.4 L509.0 300.0 L511.0 317.0 L529.0 319.0 L545.0 318.0 L551.0 328.0 L547.0 340.0" stroke="#c4d4dc" stroke-width="0.55" fill="none"/>
<path d="M466.0 270.0 L475.0 273.0 L480.0 284.0" stroke="#c4d4dc" stroke-width="0.55" fill="none"/>
<path d="M445.0 318.0 L458.0 316.0 L467.0 325.0 L471.0 340.0" stroke="#c4d4dc" stroke-width="0.55" fill="none"/>
<path d="M533.0 240.0 L545.0 247.0 L560.0 246.0 L570.0 252.0 L585.0 250.0" stroke="#c4d4dc" stroke-width="0.55" fill="none"/>
<path d="M590.0 262.0 L598.0 270.0 L596.0 285.0 L604.0 296.0 L600.0 310.0" stroke="#c4d4dc" stroke-width="0.55" fill="none"/>
<path d="M470.0 40.0 L480.0 50.0 L490.0 45.0" stroke="#c4d4dc" stroke-width="0.55" fill="none"/>
<path d="M540.0 100.0 L555.0 110.0 L570.0 108.0 L580.0 118.0" stroke="#c4d4dc" stroke-width="0.55" fill="none"/>
<path d="M450.0 120.0 L462.0 130.0 L470.0 125.0 L482.0 135.0" stroke="#c4d4dc" stroke-width="0.55" fill="none"/>
<path d="M530.0 150.0 L545.0 160.0 L560.0 155.0 L575.0 165.0 L590.0 160.0" stroke="#c4d4dc" stroke-width="0.55" fill="none"/>
<path d="M545.0 200.0 L552.0 215.0 L568.0 222.0 L590.0 215.0" stroke="#c4d4dc" stroke-width="0.55" fill="none"/>
<path d="M630.0 200.0 L645.0 210.0 L660.0 205.0 L670.0 195.0" stroke="#c4d4dc" stroke-width="0.55" fill="none"/>
<path d="M640.0 230.0 L655.0 240.0 L668.0 236.0 L680.0 245.0" stroke="#c4d4dc" stroke-width="0.55" fill="none"/>
<path d="M570.0 345.0 L585.0 352.0 L590.0 365.0 L605.0 368.0" stroke="#c4d4dc" stroke-width="0.55" fill="none"/>
<path d="M548.0 420.0 L560.0 410.0 L572.0 415.0 L585.0 405.0" stroke="#c4d4dc" stroke-width="0.55" fill="none"/>
<path d="M458.2 149.9 L467.0 157.6 L469.2 168.6 L472.5 185.2" stroke="#e3b7bf" stroke-width="0.6" fill="none"/>
<path d="M461.5 149.9 L478.0 142.2 L490.0 138.0 L511.0 132.5 L544.0 123.7 L565.0 121.5 L580.4 120.4 L582.6 132.5 L589.2 139.0" stroke="#e3b7bf" stroke-width="0.6" fill="none"/>
<path d="M615.7 119.3 L617.9 123.7 L620.0 140.0" stroke="#e3b7bf" stroke-width="0.6" fill="none"/>
<path d="M653.0 139.0 L664.0 134.7 L685.0 132.5 L700.0 136.0 L713.0 142.0" stroke="#e3b7bf" stroke-width="0.6" fill="none"/>
<path d="M595.8 140.0 L612.4 151.0 L613.5 155.4 L604.6 165.3" stroke="#e3b7bf" stroke-width="0.6" fill="none"/>
<path d="M612.4 151.0 L628.9 149.9 L639.9 144.4" stroke="#e3b7bf" stroke-width="0.6" fill="none"/>
<path d="M617.9 155.4 L619.0 184.0 L617.9 240.0 L611.3 262.0 L611.3 279.6" stroke="#e3b7bf" stroke-width="0.6" fill="none"/>
<path d="M588.1 275.2 L611.3 280.7 L617.9 284.0 L623.4 299.5 L624.5 321.5" stroke="#e3b7bf" stroke-width="0.6" fill="none"/>
<path d="M631.0 324.8 L642.0 328.1 L668.5 323.7 L685.0 319.3" stroke="#e3b7bf" stroke-width="0.6" fill="none"/>
<path d="M675.0 290.7 L664.0 301.7" stroke="#e3b7bf" stroke-width="0.6" fill="none"/>
<path d="M659.0 297.0 L664.0 310.0 L668.0 323.0" stroke="#e3b7bf" stroke-width="0.6" fill="none"/>
<path d="M524.3 265.3 L533.0 256.5 L545.2 253.2" stroke="#e3b7bf" stroke-width="0.6" fill="none"/>
<path d="M535.5 399.0 L548.0 400.3 L565.0 404.0 L580.0 402.8 L595.2 397.8 L610.2 386.5 L615.3 377.7" stroke="#e3b7bf" stroke-width="0.6" fill="none"/>
<path d="M610.0 340.0 L612.0 360.0 L615.0 377.0" stroke="#e3b7bf" stroke-width="0.6" fill="none"/>
<path d="M738.0 160.0 L745.0 175.0 L746.0 190.0" stroke="#e3b7bf" stroke-width="0.6" fill="none"/>
<path d="M531.7 352.6 L520.4 372.7 L517.9 380.2 L512.8 397.8 L507.8 412.9 L502.8 422.9 L505.3 435.5 L522.9 445.5" stroke="#cbd6de" stroke-width="0.9" fill="none"/>
<path d="M585.0 116.0 L595.0 110.0 L605.0 104.0" stroke="#cbd6de" stroke-width="0.9" fill="none"/>
<path d="M504.0 134.0 L512.0 130.0 L525.0 126.0 L540.0 126.0 L560.0 122.0 L580.0 118.0 L600.0 108.0" stroke="#cbd6de" stroke-width="0.9" fill="none"/>
<path d="M609.0 60 V67 M611.8 60 V67 M614.6 60 V67 M617.4 60 V67 M620.2 60 V67 M609 60.0 H622 M609 62.8 H622 M609 65.6 H622" stroke="#a3b3c9" stroke-width="0.3" fill="none"/>
<path d="M612.0 64 V72 M614.8 64 V72 M617.6 64 V72 M620.4 64 V72 M623.2 64 V72 M626.0 64 V72 M612 64.0 H628 M612 66.8 H628 M612 69.6 H628" stroke="#a3b3c9" stroke-width="0.3" fill="none"/>
<path d="M620.0 70 V81 M622.8 70 V81 M625.6 70 V81 M628.4 70 V81 M620 70.0 H630 M620 72.8 H630 M620 75.6 H630 M620 78.4 H630" stroke="#a3b3c9" stroke-width="0.3" fill="none"/>
<path d="M693.0 123 V129 M695.8 123 V129 M698.6 123 V129 M701.4 123 V129 M704.2 123 V129 M693 123.0 H706 M693 125.8 H706 M693 128.6 H706" stroke="#a3b3c9" stroke-width="0.3" fill="none"/>
<path d="M704.0 126 V134 M706.8 126 V134 M709.6 126 V134 M712.4 126 V134 M715.2 126 V134 M718.0 126 V134 M720.8 126 V134 M723.6 126 V134 M704 126.0 H724 M704 128.8 H724 M704 131.6 H724" stroke="#a3b3c9" stroke-width="0.3" fill="none"/>
<path d="M715.0 132 V142 M717.8 132 V142 M720.6 132 V142 M723.4 132 V142 M726.2 132 V142 M729.0 132 V142 M731.8 132 V142 M734.6 132 V142 M737.4 132 V142 M740.2 132 V142 M715 132.0 H742 M715 134.8 H742 M715 137.6 H742 M715 140.4 H742" stroke="#a3b3c9" stroke-width="0.3" fill="none"/>
<path d="M728.0 140 V150 M730.8 140 V150 M733.6 140 V150 M736.4 140 V150 M739.2 140 V150 M742.0 140 V150 M744.8 140 V150 M747.6 140 V150 M728 140.0 H750 M728 142.8 H750 M728 145.6 H750 M728 148.4 H750" stroke="#a3b3c9" stroke-width="0.3" fill="none"/>
<path d="M751.6 178 V187 M754.4 178 V187 M751.6 178.0 H757 M751.6 180.8 H757 M751.6 183.6 H757 M751.6 186.4 H757" stroke="#a3b3c9" stroke-width="0.3" fill="none"/>
<path d="M527.6 222.6 V240 M533.0 222.6 V240 M538.4 222.6 V240 M543.8 222.6 V240 M549.2 222.6 V240 M554.6 222.6 V240 M560.0 222.6 V240 M527.6 222.6 H560.6 M527.6 228.0 H560.6 M527.6 233.4 H560.6 M527.6 238.8 H560.6" stroke="#a9b6c8" stroke-width="0.35" fill="none"/>
<path d="M528.7 240 V246.6 M534.1 240 V246.6 M539.5 240 V246.6 M528.7 240.0 H542 M528.7 245.4 H542" stroke="#a9b6c8" stroke-width="0.35" fill="none"/>
<path d="M565.0 281.8 V297.3 M570.4 281.8 V297.3 M575.8 281.8 V297.3 M581.2 281.8 V297.3 M565 281.8 H586 M565 287.2 H586 M565 292.6 H586" stroke="#a9b6c8" stroke-width="0.35" fill="none"/>
<path d="M570.5 302.8 V323.7 M575.9 302.8 V323.7 M581.3 302.8 V323.7 M570.5 302.8 H586 M570.5 308.2 H586 M570.5 313.6 H586 M570.5 319.0 H586" stroke="#a9b6c8" stroke-width="0.35" fill="none"/>
<path d="M655.3 142.2 V167.5 M660.7 142.2 V167.5 M666.1 142.2 V167.5 M671.5 142.2 V167.5 M655.3 142.2 H675 M655.3 147.6 H675 M655.3 153.0 H675 M655.3 158.4 H675 M655.3 163.8 H675" stroke="#a9b6c8" stroke-width="0.35" fill="none"/>
<path d="M641.0 170.8 V184 M646.4 170.8 V184 M651.8 170.8 V184 M657.2 170.8 V184 M662.6 170.8 V184 M641 170.8 H666.3 M641 176.2 H666.3 M641 181.6 H666.3" stroke="#a9b6c8" stroke-width="0.35" fill="none"/>
<path d="M631.0 156.5 V166.4 M636.4 156.5 V166.4 M641.8 156.5 V166.4 M631 156.5 H642 M631 161.9 H642" stroke="#a9b6c8" stroke-width="0.35" fill="none"/>
<path d="M625.3 375 V390 M628.1 375 V390 M630.9 375 V390 M633.7 375 V390 M636.5 375 V390 M639.3 375 V390 M642.1 375 V390 M644.9 375 V390 M647.7 375 V390 M625.3 375.0 H648 M625.3 377.8 H648 M625.3 380.6 H648 M625.3 383.4 H648 M625.3 386.2 H648 M625.3 389.0 H648" stroke="#a3b3c9" stroke-width="0.3" fill="none"/>
<path d="M655.5 365 V375 M658.3 365 V375 M661.1 365 V375 M663.9 365 V375 M666.7 365 V375 M669.5 365 V375 M655.5 365.0 H670.5 M655.5 367.8 H670.5 M655.5 370.6 H670.5 M655.5 373.4 H670.5" stroke="#a3b3c9" stroke-width="0.3" fill="none"/>
<path d="M622.3 396.5 V404 M625.1 396.5 V404 M622.3 396.5 H625.3 M622.3 399.3 H625.3 M622.3 402.1 H625.3" stroke="#a3b3c9" stroke-width="0.3" fill="none"/>
<path d="M600.0 423 V454 M602.8 423 V454 M605.6 423 V454 M608.4 423 V454 M611.2 423 V454 M614.0 423 V454 M616.8 423 V454 M600 423.0 H617.8 M600 425.8 H617.8 M600 428.6 H617.8 M600 431.4 H617.8 M600 434.2 H617.8 M600 437.0 H617.8 M600 439.8 H617.8 M600 442.6 H617.8 M600 445.4 H617.8 M600 448.2 H617.8 M600 451.0 H617.8 M600 453.8 H617.8" stroke="#a3b3c9" stroke-width="0.3" fill="none"/>
<path d="M700.0 300 V340 M702.8 300 V340 M705.6 300 V340 M708.4 300 V340 M711.2 300 V340 M714.0 300 V340 M700 300.0 H715 M700 302.8 H715 M700 305.6 H715 M700 308.4 H715 M700 311.2 H715 M700 314.0 H715 M700 316.8 H715 M700 319.6 H715 M700 322.4 H715 M700 325.2 H715 M700 328.0 H715 M700 330.8 H715 M700 333.6 H715 M700 336.4 H715 M700 339.2 H715" stroke="#a3b3c9" stroke-width="0.3" fill="none"/>
<path d="M712.0 200 V250 M714.8 200 V250 M717.6 200 V250 M712 200.0 H720 M712 202.8 H720 M712 205.6 H720 M712 208.4 H720 M712 211.2 H720 M712 214.0 H720 M712 216.8 H720 M712 219.6 H720 M712 222.4 H720 M712 225.2 H720 M712 228.0 H720 M712 230.8 H720 M712 233.6 H720 M712 236.4 H720 M712 239.2 H720 M712 242.0 H720 M712 244.8 H720 M712 247.6 H720" stroke="#a3b3c9" stroke-width="0.3" fill="none"/>
<rect x="528.3" y="123.3" width="12" height="4.4" fill="#f1cd4f"/>
<rect x="518.3" y="128.1" width="6.4" height="4.9" fill="#f1cd4f"/>
<rect x="509.3" y="133" width="5.1" height="4.8" fill="#f1cd4f"/>
<rect x="446" y="148" width="8" height="4" fill="#f1cd4f"/>
<rect x="646" y="95.5" width="1.8" height="1.8" fill="#f1cd4f"/>
<rect x="649.3" y="97.7" width="1.8" height="1.8" fill="#f1cd4f"/>
<rect x="653.5" y="100.3" width="1.8" height="1.8" fill="#f1cd4f"/>
<rect x="673" y="118" width="11" height="4" fill="#f1cd4f"/>
<rect x="675" y="121" width="8" height="3.8" fill="#f1cd4f"/>
<rect x="604.5" y="61.3" width="1.5" height="1.5" fill="#f1cd4f"/>
<rect x="726.3" y="143" width="17.6" height="6.6" fill="#f1cd4f"/>
<rect x="717.4" y="149" width="19" height="8" fill="#f1cd4f"/>
<rect x="641" y="142.2" width="11" height="9.8" fill="#f1cd4f"/>
<rect x="652" y="144.4" width="12" height="8.8" fill="#f1cd4f"/>
<rect x="652" y="161" width="14.3" height="6.5" fill="#f1cd4f"/>
<rect x="651" y="167.5" width="8.7" height="7.7" fill="#f1cd4f"/>
<rect x="650.9" y="262" width="4.8" height="11" fill="#f1cd4f"/>
<rect x="641" y="281.8" width="5.5" height="5.6" fill="#f1cd4f"/>
<rect x="565" y="287.4" width="5.5" height="5.5" fill="#f1cd4f"/>
<rect x="580" y="281.8" width="5.3" height="5.6" fill="#f1cd4f"/>
<rect x="575" y="312.7" width="5.4" height="5.5" fill="#f1cd4f"/>
<rect x="565" y="317" width="5.5" height="5.6" fill="#f1cd4f"/>
<rect x="581.5" y="315" width="7.7" height="4" fill="#f1cd4f"/>
<rect x="583" y="318" width="3" height="5" fill="#f1cd4f"/>
<rect x="607.7" y="429" width="10" height="19" fill="#f1cd4f"/>
<rect x="596.4" y="443" width="10.1" height="11" fill="#f1cd4f"/>
<rect x="712" y="206" width="3" height="12" fill="#f1cd4f"/>
<rect x="710" y="222" width="4" height="10" fill="#f1cd4f"/>
<rect x="708" y="236" width="4" height="12" fill="#f1cd4f"/>
<rect x="713" y="210" width="2" height="6" fill="#1c7a3a"/>
<rect x="711" y="226" width="2" height="5" fill="#1c7a3a"/>
<rect x="709" y="240" width="2" height="6" fill="#1c7a3a"/>
<rect x="452" y="150" width="3" height="2" fill="#1c7a3a"/>
<rect x="712" y="148" width="2" height="2" fill="#1c7a3a"/>
<rect x="632.8" y="366.3" width="2.7" height="2.6" fill="#eec443"/>
<rect x="635.3" y="369.4" width="2.5" height="3.0" fill="#f1cd4f"/>
<rect x="627.8" y="374.3" width="2.8" height="2.5" fill="#eec443"/>
<rect x="632.7" y="386.2" width="2.5" height="2.6" fill="#eec443"/>
<rect x="628.9" y="377.4" width="3.0" height="2.4" fill="#f1cd4f"/>
<rect x="628.0" y="371.7" width="2.7" height="2.5" fill="#eec443"/>
<rect x="632.8" y="372.9" width="2.6" height="3.0" fill="#eec443"/>
<rect x="632.3" y="375.7" width="3.1" height="3.0" fill="#eec443"/>
<rect x="632.1" y="374.9" width="2.8" height="2.7" fill="#f1cd4f"/>
<rect x="634.0" y="366.5" width="2.6" height="2.6" fill="#f1cd4f"/>
<rect x="633.3" y="371.0" width="2.9" height="3.3" fill="#f1cd4f"/>
<rect x="633.9" y="368.0" width="2.5" height="2.8" fill="#f1cd4f"/>
<rect x="627.7" y="376.9" width="2.8" height="3.4" fill="#f1cd4f"/>
<rect x="631.4" y="382.6" width="2.7" height="2.8" fill="#f1cd4f"/>
<rect x="631.0" y="379.2" width="3.2" height="3.3" fill="#f1cd4f"/>
<rect x="631.9" y="380.1" width="3.1" height="2.7" fill="#f1cd4f"/>
<rect x="633.0" y="365.1" width="2.7" height="2.8" fill="#f1cd4f"/>
<rect x="631.4" y="369.5" width="2.8" height="3.0" fill="#f1cd4f"/>
<rect x="630.5" y="384.4" width="2.5" height="2.6" fill="#f1cd4f"/>
<rect x="629.5" y="367.7" width="2.6" height="2.8" fill="#f1cd4f"/>
<rect x="630.5" y="372.8" width="3.3" height="2.7" fill="#f1cd4f"/>
<rect x="628.5" y="369.9" width="3.4" height="2.6" fill="#f1cd4f"/>
<rect x="654.8" y="344.4" width="2.2" height="3.2" fill="#f1cd4f"/>
<rect x="664.8" y="358.1" width="2.7" height="2.6" fill="#f1cd4f"/>
<rect x="674.8" y="352.2" width="2.7" height="3.2" fill="#1c7a3a"/>
<rect x="662.6" y="346.9" width="2.7" height="2.7" fill="#f1cd4f"/>
<rect x="654.3" y="345.8" width="2.3" height="2.5" fill="#f1cd4f"/>
<rect x="664.2" y="357.8" width="2.3" height="2.9" fill="#f1cd4f"/>
<rect x="660.0" y="351.8" width="2.3" height="2.4" fill="#eec443"/>
<rect x="653.0" y="348.6" width="2.9" height="2.8" fill="#1c7a3a"/>
<rect x="653.8" y="354.0" width="2.8" height="2.6" fill="#eec443"/>
<rect x="663.4" y="342.9" width="2.8" height="3.0" fill="#eec443"/>
<rect x="650.7" y="349.4" width="2.4" height="2.9" fill="#f1cd4f"/>
<rect x="659.4" y="342.2" width="3.0" height="2.5" fill="#f1cd4f"/>
<rect x="658.6" y="343.2" width="2.8" height="3.1" fill="#f1cd4f"/>
<rect x="669.0" y="343.3" width="3.2" height="3.2" fill="#1c7a3a"/>
<rect x="650.7" y="344.6" width="2.6" height="2.2" fill="#eec443"/>
<rect x="659.1" y="355.0" width="2.4" height="2.9" fill="#eec443"/>
<rect x="655.6" y="343.4" width="3.3" height="2.6" fill="#f1cd4f"/>
<rect x="675.8" y="351.1" width="2.6" height="2.8" fill="#f1cd4f"/>
<rect x="670.8" y="340.5" width="2.8" height="3.0" fill="#f1cd4f"/>
<rect x="669.1" y="348.2" width="3.3" height="3.1" fill="#f1cd4f"/>
<rect x="652.3" y="357.7" width="2.7" height="3.0" fill="#1c7a3a"/>
<rect x="652.2" y="341.9" width="2.8" height="3.1" fill="#f1cd4f"/>
<rect x="662.4" y="351.9" width="2.2" height="2.9" fill="#1c7a3a"/>
<rect x="664.2" y="341.5" width="3.0" height="2.6" fill="#f1cd4f"/>
<rect x="652.6" y="353.7" width="3.2" height="3.1" fill="#f1cd4f"/>
<rect x="671.5" y="342.9" width="2.7" height="3.2" fill="#eec443"/>
<rect x="670.1" y="345.4" width="2.5" height="2.8" fill="#1c7a3a"/>
<rect x="668.9" y="357.3" width="3.2" height="2.3" fill="#1c7a3a"/>
<rect x="653.3" y="341.8" width="3.2" height="3.3" fill="#f1cd4f"/>
<rect x="665.6" y="354.1" width="3.2" height="3.1" fill="#f1cd4f"/>
<rect x="669.1" y="350.0" width="2.4" height="2.8" fill="#eec443"/>
<rect x="662.4" y="354.4" width="3.0" height="2.8" fill="#f1cd4f"/>
<rect x="670.3" y="349.1" width="2.5" height="2.5" fill="#f1cd4f"/>
<rect x="661.4" y="350.8" width="3.1" height="3.3" fill="#f1cd4f"/>
<rect x="663.7" y="348.4" width="3.0" height="2.7" fill="#f1cd4f"/>
<rect x="674.3" y="343.9" width="3.0" height="3.3" fill="#f1cd4f"/>
<rect x="653.1" y="347.9" width="3.2" height="2.4" fill="#f1cd4f"/>
<rect x="655.5" y="344.9" width="3.0" height="2.7" fill="#f1cd4f"/>
<rect x="668.3" y="352.3" width="3.3" height="2.4" fill="#f1cd4f"/>
<rect x="662.3" y="354.1" width="2.5" height="2.4" fill="#f1cd4f"/>
<rect x="675.9" y="355.5" width="2.7" height="2.8" fill="#f1cd4f"/>
<rect x="660.4" y="347.0" width="3.0" height="3.4" fill="#eec443"/>
<rect x="650.5" y="349.8" width="2.6" height="3.1" fill="#1c7a3a"/>
<rect x="663.3" y="344.8" width="3.0" height="2.7" fill="#f1cd4f"/>
<rect x="656.0" y="356.0" width="2.3" height="3.3" fill="#f1cd4f"/>
<rect x="670.5" y="344.4" width="2.5" height="2.2" fill="#f1cd4f"/>
<rect x="667.3" y="357.4" width="3.2" height="3.2" fill="#1c7a3a"/>
<rect x="665.1" y="352.5" width="2.4" height="3.3" fill="#f1cd4f"/>
<rect x="654.8" y="356.5" width="2.5" height="3.2" fill="#eec443"/>
<rect x="670.4" y="340.5" width="3.3" height="3.0" fill="#f1cd4f"/>
<rect x="662.0" y="345.5" width="2.3" height="3.2" fill="#1c7a3a"/>
<rect x="653.3" y="349.5" width="3.3" height="2.5" fill="#f1cd4f"/>
<rect x="656.7" y="342.3" width="3.3" height="3.4" fill="#eec443"/>
<rect x="655.3" y="347.7" width="3.0" height="2.8" fill="#f1cd4f"/>
<rect x="676.1" y="339.5" width="2.5" height="3.2" fill="#f1cd4f"/>
<rect x="657.5" y="347.5" width="2.1" height="2.0" fill="#2e8a3e"/>
<rect x="663.5" y="347.6" width="1.5" height="2.2" fill="#2e8a3e"/>
<rect x="658.0" y="344.5" width="2.4" height="1.7" fill="#1c7a3a"/>
<rect x="668.0" y="346.6" width="2.2" height="2.1" fill="#2e8a3e"/>
<rect x="653.3" y="349.2" width="2.4" height="2.2" fill="#2e8a3e"/>
<rect x="668.9" y="346.5" width="1.8" height="1.5" fill="#2e8a3e"/>
<rect x="654.1" y="343.9" width="2.0" height="2.1" fill="#2e8a3e"/>
<rect x="676.0" y="354.0" width="1.8" height="1.7" fill="#2e8a3e"/>
<rect x="660.5" y="345.9" width="1.6" height="2.4" fill="#1c7a3a"/>
<rect x="659.7" y="350.1" width="1.7" height="1.5" fill="#1c7a3a"/>
<rect x="659.3" y="342.8" width="1.9" height="1.4" fill="#2e8a3e"/>
<rect x="660.1" y="349.5" width="2.0" height="1.8" fill="#1c7a3a"/>
<rect x="670.9" y="349.8" width="2.0" height="1.9" fill="#2e8a3e"/>
<rect x="664.7" y="345.1" width="2.2" height="2.1" fill="#1c7a3a"/>
<rect x="674.7" y="349.2" width="1.4" height="2.2" fill="#1c7a3a"/>
<rect x="666.4" y="351.6" width="2.3" height="2.2" fill="#1c7a3a"/>
<rect x="674.0" y="350.1" width="2.2" height="2.0" fill="#1c7a3a"/>
<rect x="668.5" y="354.0" width="1.5" height="1.4" fill="#2e8a3e"/>
<rect x="667.8" y="349.4" width="2.2" height="2.0" fill="#1c7a3a"/>
<rect x="672.1" y="351.3" width="1.9" height="1.4" fill="#1c7a3a"/>
<rect x="670.5" y="344.9" width="2.1" height="1.5" fill="#1c7a3a"/>
<rect x="670.8" y="344.5" width="2.2" height="1.6" fill="#2e8a3e"/>
<rect x="664.5" y="350.2" width="1.9" height="1.8" fill="#1c7a3a"/>
<rect x="654.8" y="343.4" width="2.0" height="2.0" fill="#2e8a3e"/>
<rect x="667.8" y="343.2" width="2.1" height="2.1" fill="#2e8a3e"/>
<rect x="691.5" y="341.9" width="2.3" height="2.5" fill="#eec443"/>
<rect x="688.8" y="339.8" width="2.7" height="2.9" fill="#f1cd4f"/>
<rect x="688.8" y="336.7" width="3.2" height="2.7" fill="#f1cd4f"/>
<rect x="692.6" y="344.1" width="2.2" height="2.7" fill="#f1cd4f"/>
<rect x="692.3" y="343.8" width="3.2" height="2.6" fill="#f1cd4f"/>
<rect x="690.3" y="344.2" width="2.8" height="2.3" fill="#f1cd4f"/>
<rect x="688.7" y="336.9" width="2.8" height="2.8" fill="#f1cd4f"/>
<rect x="690.2" y="336.2" width="2.4" height="3.1" fill="#f1cd4f"/>
<rect x="689.4" y="341.9" width="3.1" height="2.9" fill="#f1cd4f"/>
<rect x="692.4" y="336.0" width="2.5" height="2.5" fill="#f1cd4f"/>
<rect x="701.2" y="323.9" width="3.0" height="2.3" fill="#eec443"/>
<rect x="698.4" y="327.6" width="2.5" height="2.3" fill="#f1cd4f"/>
<rect x="697.7" y="308.1" width="2.6" height="2.6" fill="#f1cd4f"/>
<rect x="700.0" y="310.4" width="2.3" height="2.9" fill="#eec443"/>
<rect x="700.6" y="325.4" width="2.6" height="2.5" fill="#1c7a3a"/>
<rect x="699.5" y="328.0" width="3.1" height="3.0" fill="#f1cd4f"/>
<rect x="700.2" y="317.7" width="2.9" height="2.2" fill="#f1cd4f"/>
<rect x="696.3" y="328.8" width="2.8" height="2.5" fill="#f1cd4f"/>
<rect x="697.8" y="313.0" width="2.4" height="2.6" fill="#eec443"/>
<rect x="698.9" y="322.8" width="2.6" height="2.4" fill="#f1cd4f"/>
<rect x="697.3" y="328.4" width="2.4" height="2.4" fill="#1c7a3a"/>
<rect x="697.9" y="324.7" width="2.8" height="2.7" fill="#1c7a3a"/>
<rect x="696.6" y="315.1" width="2.3" height="2.4" fill="#f1cd4f"/>
<rect x="700.9" y="311.7" width="2.5" height="2.6" fill="#f1cd4f"/>
<rect x="698.3" y="319.3" width="2.9" height="2.6" fill="#1c7a3a"/>
<rect x="699.1" y="320.2" width="2.5" height="3.0" fill="#eec443"/>
<rect x="700.0" y="327.1" width="2.3" height="2.7" fill="#f1cd4f"/>
<rect x="698.4" y="321.8" width="2.3" height="3.1" fill="#1c7a3a"/>
<rect x="700.8" y="307.5" width="3.2" height="3.0" fill="#f1cd4f"/>
<rect x="700.8" y="329.3" width="2.6" height="3.0" fill="#1c7a3a"/>
<rect x="701.9" y="326.3" width="2.2" height="2.6" fill="#1c7a3a"/>
<rect x="696.6" y="310.6" width="3.2" height="2.4" fill="#f1cd4f"/>
<rect x="708.0" y="302.1" width="3.1" height="2.9" fill="#f1cd4f"/>
<rect x="704.6" y="296.8" width="2.3" height="3.0" fill="#eec443"/>
<rect x="706.2" y="296.9" width="3.1" height="2.8" fill="#f1cd4f"/>
<rect x="708.9" y="296.7" width="2.7" height="2.6" fill="#f1cd4f"/>
<rect x="706.8" y="297.7" width="2.7" height="2.8" fill="#eec443"/>
<rect x="710.8" y="298.2" width="2.2" height="2.7" fill="#f1cd4f"/>
<rect x="707.2" y="297.7" width="2.8" height="3.1" fill="#f1cd4f"/>
<rect x="708.6" y="296.3" width="2.2" height="2.6" fill="#f1cd4f"/>
<rect x="686.4" y="330.2" width="1.9" height="2.1" fill="#2e8a3e"/>
<rect x="683.3" y="331.4" width="2.3" height="1.6" fill="#2e8a3e"/>
<rect x="683.1" y="330.7" width="1.8" height="1.8" fill="#1c7a3a"/>
<rect x="685.6" y="337.0" width="1.6" height="2.4" fill="#1c7a3a"/>
<rect x="690.2" y="328.4" width="1.9" height="1.7" fill="#2e8a3e"/>
<rect x="686.9" y="338.2" width="2.0" height="2.3" fill="#1c7a3a"/>
<rect x="686.0" y="329.8" width="2.3" height="1.5" fill="#1c7a3a"/>
<rect x="684.5" y="332.6" width="1.8" height="2.1" fill="#2e8a3e"/>
<rect x="690.3" y="331.0" width="2.1" height="2.4" fill="#1c7a3a"/>
<rect x="686.7" y="331.0" width="2.1" height="1.9" fill="#2e8a3e"/>
<rect x="665.3" y="362.1" width="3.0" height="3.2" fill="#f1cd4f"/>
<rect x="670.1" y="362.3" width="2.5" height="2.6" fill="#f1cd4f"/>
<rect x="664.3" y="365.1" width="2.6" height="3.0" fill="#f1cd4f"/>
<rect x="665.0" y="365.9" width="2.2" height="2.7" fill="#f1cd4f"/>
<rect x="665.8" y="364.4" width="2.5" height="2.9" fill="#f1cd4f"/>
<rect x="661.9" y="361.8" width="3.0" height="3.0" fill="#f1cd4f"/>
<rect x="720.4" y="147.5" width="2.6" height="1.7" fill="#eec443"/>
<rect x="734.1" y="147.3" width="2.0" height="2.0" fill="#eec443"/>
<rect x="729.5" y="151.8" width="2.7" height="2.0" fill="#f1cd4f"/>
<rect x="725.7" y="154.8" width="1.6" height="1.9" fill="#1c7a3a"/>
<rect x="731.2" y="148.0" width="2.5" height="2.7" fill="#1c7a3a"/>
<rect x="730.4" y="153.1" width="1.8" height="2.6" fill="#f1cd4f"/>
<rect x="722.6" y="149.9" width="2.3" height="2.0" fill="#f1cd4f"/>
<rect x="719.8" y="150.2" width="2.2" height="2.1" fill="#f1cd4f"/>
<rect x="719.9" y="150.3" width="2.2" height="2.3" fill="#f1cd4f"/>
<rect x="718.4" y="147.8" width="2.8" height="1.9" fill="#1c7a3a"/>
<rect x="720.0" y="148.0" width="2.8" height="2.8" fill="#1c7a3a"/>
<rect x="730.2" y="153.4" width="2.3" height="2.4" fill="#f1cd4f"/>
<rect x="721.9" y="149.2" width="2.5" height="2.0" fill="#eec443"/>
<rect x="721.3" y="149.0" width="2.5" height="1.8" fill="#f1cd4f"/>
<rect x="720.4" y="147.5" width="1.9" height="2.7" fill="#eec443"/>
<rect x="721.0" y="153.3" width="2.8" height="2.2" fill="#1c7a3a"/>
<circle cx="447" cy="152" r="0.7" fill="#c0283a"/>
<circle cx="450" cy="154" r="0.7" fill="#c0283a"/>
<circle cx="455" cy="150" r="0.7" fill="#c0283a"/>
<circle cx="667.4" cy="129.2" r="0.7" fill="#c0283a"/>
<circle cx="669.6" cy="130.7" r="0.7" fill="#c0283a"/>
<circle cx="648" cy="282" r="0.7" fill="#c0283a"/>
<circle cx="657" cy="150" r="0.7" fill="#c0283a"/>
<circle cx="660" cy="152" r="0.7" fill="#c0283a"/>
<circle cx="658" cy="337" r="0.7" fill="#c0283a"/>
<circle cx="661" cy="339" r="0.7" fill="#c0283a"/>
<circle cx="640" cy="351" r="0.7" fill="#c0283a"/>
<circle cx="636" cy="356" r="0.7" fill="#c0283a"/>
<circle cx="723" cy="146" r="0.7" fill="#c0283a"/>
<circle cx="663" cy="364" r="1.3" fill="#3ad0e0"/>
<circle cx="667" cy="365" r="1.3" fill="#3ad0e0"/>
<circle cx="602.4" cy="55.4" r="4.70" fill="#8496a4"/><circle cx="602.4" cy="55.4" r="3.34" fill="#4e6170"/><circle cx="601.80" cy="55.80" r="1.23" fill="#3f9a5a"/><circle cx="602.90" cy="54.90" r="0.97" fill="#e2c64a"/><text x="602.4" y="56.72" font-family="Liberation Sans" font-size="3.74" text-anchor="middle" fill="#e8eef2" opacity="0.8">9</text>
<circle cx="641.7" cy="93.3" r="4.70" fill="#8496a4"/><circle cx="641.7" cy="93.3" r="3.34" fill="#4e6170"/><circle cx="641.10" cy="93.70" r="1.23" fill="#3f9a5a"/><circle cx="642.20" cy="92.80" r="0.97" fill="#e2c64a"/><text x="641.7" y="94.62" font-family="Liberation Sans" font-size="3.74" text-anchor="middle" fill="#e8eef2" opacity="0.8">2</text>
<circle cx="668.5" cy="112.7" r="4.70" fill="#8496a4"/><circle cx="668.5" cy="112.7" r="3.34" fill="#4e6170"/><circle cx="667.90" cy="113.10" r="1.23" fill="#3f9a5a"/><circle cx="669.00" cy="112.20" r="0.97" fill="#e2c64a"/><text x="668.5" y="114.02" font-family="Liberation Sans" font-size="3.74" text-anchor="middle" fill="#e8eef2" opacity="0.8">2</text>
<circle cx="657.5" cy="157.8" r="4.70" fill="#8496a4"/><circle cx="657.5" cy="157.8" r="3.34" fill="#4e6170"/><circle cx="656.90" cy="158.20" r="1.23" fill="#3f9a5a"/><circle cx="658.00" cy="157.30" r="0.97" fill="#e2c64a"/><text x="657.5" y="159.12" font-family="Liberation Sans" font-size="3.74" text-anchor="middle" fill="#e8eef2" opacity="0.8">5</text>
<circle cx="527.2" cy="130.5" r="3.30" fill="#8496a4"/><circle cx="527.2" cy="130.5" r="2.28" fill="#4e6170"/><circle cx="526.60" cy="130.90" r="0.84" fill="#3f9a5a"/><circle cx="527.70" cy="130.00" r="0.66" fill="#e2c64a"/>
<circle cx="700" cy="288.5" r="4.70" fill="#8496a4"/><circle cx="700" cy="288.5" r="3.34" fill="#4e6170"/><circle cx="699.40" cy="288.90" r="1.23" fill="#3f9a5a"/><circle cx="700.50" cy="288.00" r="0.97" fill="#e2c64a"/><text x="700" y="289.82" font-family="Liberation Sans" font-size="3.74" text-anchor="middle" fill="#e8eef2" opacity="0.8">5</text>
<circle cx="699" cy="328" r="4.70" fill="#8496a4"/><circle cx="699" cy="328" r="3.34" fill="#4e6170"/><circle cx="698.40" cy="328.40" r="1.23" fill="#3f9a5a"/><circle cx="699.50" cy="327.50" r="0.97" fill="#e2c64a"/><text x="699" y="329.32" font-family="Liberation Sans" font-size="3.74" text-anchor="middle" fill="#e8eef2" opacity="0.8">6</text>
<circle cx="645.5" cy="370.2" r="7.60" fill="#8496a4"/><circle cx="645.5" cy="370.2" r="5.55" fill="#4e6170"/><circle cx="644.90" cy="370.60" r="2.04" fill="#3f9a5a"/><circle cx="646.00" cy="369.70" r="1.61" fill="#e2c64a"/><text x="645.5" y="372.39" font-family="Liberation Sans" font-size="6.21" text-anchor="middle" fill="#e8eef2" opacity="0.8">10</text>
<circle cx="605.7" cy="439.2" r="4.70" fill="#8496a4"/><circle cx="605.7" cy="439.2" r="3.34" fill="#4e6170"/><circle cx="605.10" cy="439.60" r="1.23" fill="#3f9a5a"/><circle cx="606.20" cy="438.70" r="0.97" fill="#e2c64a"/><text x="605.7" y="440.52" font-family="Liberation Sans" font-size="3.74" text-anchor="middle" fill="#e8eef2" opacity="0.8">2</text>
</svg>
</div>
<div id="maplabels">
<div class="t" style="left:512.4px;top:48.7px;font-size:4.6px;color:#6b7c88;">Guyana</div>
<div class="t" style="left:539.7px;top:66.5px;font-size:4.6px;color:#6b7c88;">Suriname</div>
<div class="t" style="left:559.5px;top:60.5px;font-size:4.2px;color:#6b7c88;">French Guiana</div>
<div class="t" style="left:488px;top:83.8px;font-size:3.0px;color:#8494a0;letter-spacing:0.35px;">RORAIMA</div>
<div class="t" style="left:578.9px;top:89.5px;font-size:3.0px;color:#8494a0;letter-spacing:0.35px;">AMAPÁ</div>
<div class="t" style="left:455px;top:142.7px;font-size:3.0px;color:#8494a0;letter-spacing:0.35px;">AMAZONAS</div>
<div class="t" style="left:569.4px;top:141.5px;font-size:3.0px;color:#8494a0;letter-spacing:0.35px;">PARÁ</div>
<div class="t" style="left:637.7px;top:151.3px;font-size:3.0px;color:#8494a0;letter-spacing:0.35px;">MARANHÃO</div>
<div class="t" style="left:665px;top:173.3px;font-size:3.0px;color:#8494a0;letter-spacing:0.35px;">PIAUÍ</div>
<div class="t" style="left:696.5px;top:148.9px;font-size:3.0px;color:#8494a0;letter-spacing:0.35px;">CEARÁ</div>
<div class="t" style="left:720.7px;top:170.9px;font-size:3.0px;color:#8494a0;letter-spacing:0.35px;">PARAÍBA</div>
<div class="t" style="left:703px;top:183.0px;font-size:3.0px;color:#8494a0;letter-spacing:0.35px;">PERNAMBUCO</div>
<div class="t" style="left:609px;top:199.3px;font-size:3.0px;color:#8494a0;letter-spacing:0.35px;">TOCANTINS</div>
<div class="t" style="left:673px;top:215.3px;font-size:3.0px;color:#8494a0;letter-spacing:0.35px;">BAHIA</div>
<div class="t" style="left:468px;top:198.8px;font-size:3.0px;color:#8494a0;letter-spacing:0.35px;">RONDÔNIA</div>
<div class="t" style="left:601.3px;top:256.5px;font-size:3.0px;color:#8494a0;letter-spacing:0.35px;">GOIÁS</div>
<div class="t" style="left:602.4px;top:317.6px;font-size:3.0px;color:#8494a0;letter-spacing:0.35px;">SÃO PAULO</div>
<div class="t" style="left:581.3px;top:341.9px;font-size:3.0px;color:#8494a0;letter-spacing:0.35px;">PARANÁ</div>
<div class="t" style="left:582.2px;top:191.2px;font-size:5.0px;color:#5e6f7b;">Brazil</div>
<div class="t" style="left:461.5px;top:263.3px;font-size:4.8px;color:#6b7c88;">Bolivia</div>
<div class="t" style="left:513.7px;top:326.5px;font-size:4.8px;color:#6b7c88;">Paraguay</div>
<div class="t" style="left:538px;top:428.9px;font-size:4.8px;color:#6b7c88;">Uruguay</div>
<div class="t" style="left:543px;top:224.0px;font-size:3.0px;line-height:4.4px;color:#8494a0;letter-spacing:0.35px;text-align:center">MATO<br>GROSSO</div>
<div class="t" style="left:617.9px;top:249.0px;font-size:3.0px;line-height:4.4px;color:#8494a0;letter-spacing:0.35px;text-align:center">DISTRITO<br>FEDERAL</div>
<div class="t" style="left:652px;top:274.3px;font-size:3.0px;line-height:4.4px;color:#8494a0;letter-spacing:0.35px;text-align:center">MINAS<br>GERAIS</div>
<div class="t" style="left:671.8px;top:312.2px;font-size:3.0px;line-height:4.4px;color:#8494a0;letter-spacing:0.35px;text-align:center">RIO DE<br>JANEIRO</div>
<div class="t" style="left:589px;top:364.5px;font-size:3.0px;line-height:4.4px;color:#8494a0;letter-spacing:0.35px;text-align:center">SANTA<br>CATARINA</div>
<div class="t" style="left:553px;top:385.1px;font-size:3.0px;line-height:4.4px;color:#8494a0;letter-spacing:0.35px;text-align:center">RIO GRANDE<br>DO SUL</div>
<div class="t" style="left:543px;top:288.0px;font-size:3.0px;line-height:4.4px;color:#8494a0;letter-spacing:0.35px;text-align:center">MATO GROSSO<br>DO SUL</div>
</div>
<div class="abs" style="left:449px;top:226px;width:1.6px;height:42.5px;background:#4a7891"></div>
<div class="abs" style="left:455px;top:425px;width:11.4px;height:22.5px;background:#fff;border-radius:1.5px;box-shadow:0 0 1.5px rgba(0,0,0,.25)"></div>
<div class="abs" style="left:455px;top:436.2px;width:11.4px;height:0.5px;background:#e3e7ea"></div>
<svg class="abs" style="left:458px;top:427.5px" width="6" height="6" viewBox="0 0 6 6"><path d="M3 0.8 V5.2 M0.8 3 H5.2" stroke="#1d2f3b" stroke-width="0.8"/></svg>
<svg class="abs" style="left:458px;top:439px" width="6" height="6" viewBox="0 0 6 6"><path d="M0.8 3 H5.2" stroke="#1d2f3b" stroke-width="0.8"/></svg>
<div class="t" style="left:457px;top:450.8px;font-size:3px;color:#8a969e">ⓘ mapbox</div>
<div id="panel">
<div class="abs" style="left:722.3px;top:188px;width:12.5px;height:12.5px;background:rgba(255,255,255,0.9);border-radius:1.5px;box-shadow:0 0 1px rgba(0,0,0,.12)"></div>
<div class="abs" style="left:736.8px;top:188px;width:12.2px;height:12.5px;background:rgba(255,255,255,0.9);border-radius:1.5px;box-shadow:0 0 1px rgba(0,0,0,.12)"></div>
<div class="abs" style="left:752px;top:188px;width:13px;height:12.5px;background:rgba(255,255,255,0.9);border-radius:1.5px;box-shadow:0 0 1px rgba(0,0,0,.12)"></div>
<div class="abs" style="left:768px;top:188px;width:12.5px;height:12.5px;background:rgba(255,255,255,0.9);border-radius:1.5px;box-shadow:0 0 1px rgba(0,0,0,.12)"></div>
<svg class="abs" style="left:725.5px;top:191.3px" width="6" height="6" viewBox="0 0 6 6"><rect x="0.5" y="0.5" width="5" height="5" stroke="#2d4556" stroke-width="0.7" fill="none" stroke-dasharray="1.2 0.4"/></svg>
<svg class="abs" style="left:739.8px;top:191px" width="7" height="7" viewBox="0 0 7 7"><path d="M3.5 0.6 L6.3 2.6 L5.3 6 H1.7 L0.7 2.6Z" stroke="#2d4556" stroke-width="0.7" fill="none"/></svg>
<svg class="abs" style="left:755.3px;top:191px" width="7" height="7" viewBox="0 0 7 7"><path d="M1.2 5.8 L5.8 1.2" stroke="#2d4556" stroke-width="2.2" stroke-linecap="round"/><path d="M1.2 5.8 L5.8 1.2" stroke="#fff" stroke-width="0.9" stroke-linecap="round" stroke-dasharray="0.6 0.6"/></svg>
<svg class="abs" style="left:771px;top:191px" width="7" height="7" viewBox="0 0 7 7"><path d="M3.5 0.3 V3.8" stroke="#2d4556" stroke-width="0.8"/><path d="M1.9 2.5 L3.5 4.2 L5.1 2.5" stroke="#2d4556" stroke-width="0.8" fill="none"/><path d="M0.6 4.5 V6.4 H6.4 V4.5" stroke="#2d4556" stroke-width="0.8" fill="none"/></svg>
<div class="abs" style="left:721.2px;top:203.5px;width:74.8px;height:244.1px;background:#fff;border-radius:2px;box-shadow:0 0 2px rgba(0,0,0,.15)"></div>
<div class="t" style="left:726px;top:208.5px;font-size:5.1px;color:#253b49">Legend</div>
<svg class="abs" style="left:785.5px;top:209.5px" width="5" height="3.5" viewBox="0 0 5 3.5"><path d="M0.7 0.8 L2.5 2.6 L4.3 0.8" stroke="#2d4556" stroke-width="0.8" fill="none"/></svg>
<div class="abs" style="left:721.2px;top:219.4px;width:74.8px;height:14.8px;border:0.9px solid #93d2ef;border-radius:1px"></div>
<div class="t" style="left:726.6px;top:224.5px;font-size:5.3px;color:#253b49">Layers</div>
<svg class="abs" style="left:785.5px;top:225.5px" width="5" height="3.5" viewBox="0 0 5 3.5"><path d="M0.7 2.7 L2.5 0.9 L4.3 2.7" stroke="#2d4556" stroke-width="0.8" fill="none"/></svg>
<div class="abs" style="left:723px;top:236.9px;width:71px;height:12.4px;border:0.6px dashed #cbd3d9;border-radius:1px"></div>
<div class="abs" style="left:744.5px;top:240.2px;width:6px;height:6px;border-radius:50%;background:#1b8a3a"></div>
<svg class="abs" style="left:744.5px;top:240.2px" width="6" height="6" viewBox="0 0 6 6"><path d="M3 1.3 V4.7 M1.3 3 H4.7" stroke="#fff" stroke-width="0.8"/></svg>
<div class="t" style="left:754px;top:241.8px;font-size:4.5px;color:#1b8a3a;-webkit-text-stroke:0.05px">Add layer</div>
<div class="abs" style="left:723.6px;top:251.2px;width:69.2px;height:12.6px;background:#d7e2ea;border-radius:1.5px 1.5px 0 0"></div>
<div class="abs" style="left:726px;top:254.8px;width:6.6px;height:6.4px;background:#0a63a8;border-radius:1px"></div>
<svg class="abs" style="left:726px;top:254.8px" width="6.6" height="6.4" viewBox="0 0 6.6 6.4"><path d="M1.6 3.3 L2.8 4.5 L5 2" stroke="#fff" stroke-width="0.8" fill="none"/></svg>
<div class="t" style="left:735.2px;top:256.2px;font-size:4.3px;color:#3a4e5b;-webkit-text-stroke:0">Prospects (C...</div>
<div class="abs" style="left:764.0px;top:255px;width:16px;height:6px;background:#eef2f5;border-radius:3px"></div>
<div class="t" style="left:765.5px;top:256.6px;font-size:3.9px;color:#7f8e98;-webkit-text-stroke:0">Filtered</div>
<div class="abs" style="left:783px;top:254.4px;width:7.4px;height:7.4px;border-radius:50%;background:#fff"></div>
<svg class="abs" style="left:785.3px;top:256.0px" width="3.5" height="4.5" viewBox="0 0 3.5 4.5"><path d="M0.9 0.6 L2.6 2.25 L0.9 3.9" stroke="#1f3442" stroke-width="0.85" fill="none"/></svg>
<div class="abs" style="left:723.6px;top:263.8px;width:69.2px;height:12.6px;background:#d7e2ea;border-radius:0 0 1.5px 1.5px"></div>
<div class="abs" style="left:726px;top:267.3px;width:6.6px;height:6.4px;background:#0a63a8;border-radius:1px"></div>
<svg class="abs" style="left:726px;top:267.3px" width="6.6" height="6.4" viewBox="0 0 6.6 6.4"><path d="M1.6 3.3 L2.8 4.5 L5 2" stroke="#fff" stroke-width="0.8" fill="none"/></svg>
<div class="t" style="left:735.2px;top:268.7px;font-size:4.3px;color:#3a4e5b;-webkit-text-stroke:0">Prospects (P...</div>
<div class="abs" style="left:764.0px;top:267.5px;width:16px;height:6px;background:#eef2f5;border-radius:3px"></div>
<div class="t" style="left:765.5px;top:269.1px;font-size:3.9px;color:#7f8e98;-webkit-text-stroke:0">Filtered</div>
<div class="abs" style="left:783px;top:266.9px;width:7.4px;height:7.4px;border-radius:50%;background:#fff"></div>
<svg class="abs" style="left:785.3px;top:268.5px" width="3.5" height="4.5" viewBox="0 0 3.5 4.5"><path d="M0.9 0.6 L2.6 2.25 L0.9 3.9" stroke="#1f3442" stroke-width="0.85" fill="none"/></svg>
<div class="abs" style="left:726px;top:280.1px;width:6.6px;height:6.4px;background:#fff;border:0.6px solid #d3dbe0;border-radius:1px"></div>
<div class="t" style="left:735.2px;top:281.5px;font-size:4.4px;color:#3a4e5b;-webkit-text-stroke:0">Refineries</div>
<div class="t" style="left:765.5px;top:281.9px;font-size:3.9px;color:#7f8e98;-webkit-text-stroke:0">Filtered</div>
<div class="abs" style="left:783px;top:279.7px;width:7.4px;height:7.4px;border-radius:50%;background:#f2f5f7"></div>
<svg class="abs" style="left:785.3px;top:281.3px" width="3.5" height="4.5" viewBox="0 0 3.5 4.5"><path d="M0.9 0.6 L2.6 2.25 L0.9 3.9" stroke="#1f3442" stroke-width="0.85" fill="none"/></svg>
<div class="abs" style="left:726px;top:293.3px;width:6.6px;height:6.4px;background:#fff;border:0.6px solid #d3dbe0;border-radius:1px"></div>
<div class="t" style="left:735.2px;top:294.7px;font-size:4.4px;color:#3a4e5b;-webkit-text-stroke:0">LNG plants</div>
<div class="t" style="left:765.5px;top:295.1px;font-size:3.9px;color:#7f8e98;-webkit-text-stroke:0">Filtered</div>
<div class="abs" style="left:783px;top:292.9px;width:7.4px;height:7.4px;border-radius:50%;background:#f2f5f7"></div>
<svg class="abs" style="left:785.3px;top:294.5px" width="3.5" height="4.5" viewBox="0 0 3.5 4.5"><path d="M0.9 0.6 L2.6 2.25 L0.9 3.9" stroke="#1f3442" stroke-width="0.85" fill="none"/></svg>
<div class="abs" style="left:726px;top:306.1px;width:6.6px;height:6.4px;background:#0a63a8;border-radius:1px"></div>
<svg class="abs" style="left:726px;top:306.1px" width="6.6" height="6.4" viewBox="0 0 6.6 6.4"><path d="M1.6 3.3 L2.8 4.5 L5 2" stroke="#fff" stroke-width="0.8" fill="none"/></svg>
<div class="t" style="left:735.2px;top:307.5px;font-size:4.4px;color:#3a4e5b;-webkit-text-stroke:0">Terminals</div>
<div class="abs" style="left:776px;top:307.3px;width:4px;height:4px;border-radius:50%;background:#e6ebee"></div>
<div class="abs" style="left:783px;top:305.7px;width:7.4px;height:7.4px;border-radius:50%;background:#f2f5f7"></div>
<svg class="abs" style="left:785.3px;top:307.3px" width="3.5" height="4.5" viewBox="0 0 3.5 4.5"><path d="M0.9 0.6 L2.6 2.25 L0.9 3.9" stroke="#1f3442" stroke-width="0.85" fill="none"/></svg>
<div class="abs" style="left:726px;top:319.1px;width:6.6px;height:6.4px;background:#0a63a8;border-radius:1px"></div>
<svg class="abs" style="left:726px;top:319.1px" width="6.6" height="6.4" viewBox="0 0 6.6 6.4"><path d="M1.6 3.3 L2.8 4.5 L5 2" stroke="#fff" stroke-width="0.8" fill="none"/></svg>
<div class="t" style="left:735.2px;top:320.5px;font-size:4.4px;color:#3a4e5b;-webkit-text-stroke:0">Platforms</div>
<div class="abs" style="left:776px;top:320.3px;width:4px;height:4px;border-radius:50%;background:#e6ebee"></div>
<div class="abs" style="left:783px;top:318.7px;width:7.4px;height:7.4px;border-radius:50%;background:#f2f5f7"></div>
<svg class="abs" style="left:785.3px;top:320.3px" width="3.5" height="4.5" viewBox="0 0 3.5 4.5"><path d="M0.9 0.6 L2.6 2.25 L0.9 3.9" stroke="#1f3442" stroke-width="0.85" fill="none"/></svg>
<div class="abs" style="left:726px;top:332.1px;width:6.6px;height:6.4px;background:#0a63a8;border-radius:1px"></div>
<svg class="abs" style="left:726px;top:332.1px" width="6.6" height="6.4" viewBox="0 0 6.6 6.4"><path d="M1.6 3.3 L2.8 4.5 L5 2" stroke="#fff" stroke-width="0.8" fill="none"/></svg>
<div class="t" style="left:735.2px;top:333.5px;font-size:4.4px;color:#3a4e5b;-webkit-text-stroke:0">Wells</div>
<div class="t" style="left:759px;top:333.9px;font-size:3.9px;color:#7f8e98;-webkit-text-stroke:0">Filtered</div>
<div class="abs" style="left:776px;top:333.3px;width:4px;height:4px;border-radius:50%;background:#e6ebee"></div>
<div class="abs" style="left:783px;top:331.7px;width:7.4px;height:7.4px;border-radius:50%;background:#f2f5f7"></div>
<svg class="abs" style="left:785.3px;top:333.3px" width="3.5" height="4.5" viewBox="0 0 3.5 4.5"><path d="M0.9 0.6 L2.6 2.25 L0.9 3.9" stroke="#1f3442" stroke-width="0.85" fill="none"/></svg>
<div class="abs" style="left:726px;top:344.8px;width:6.6px;height:6.4px;background:#0a63a8;border-radius:1px"></div>
<svg class="abs" style="left:726px;top:344.8px" width="6.6" height="6.4" viewBox="0 0 6.6 6.4"><path d="M1.6 3.3 L2.8 4.5 L5 2" stroke="#fff" stroke-width="0.8" fill="none"/></svg>
<div class="t" style="left:735.2px;top:346.2px;font-size:4.4px;color:#3a4e5b;-webkit-text-stroke:0">Pipelines</div>
<div class="t" style="left:765.5px;top:346.6px;font-size:3.9px;color:#7f8e98;-webkit-text-stroke:0">Filtered</div>
<div class="abs" style="left:783px;top:344.4px;width:7.4px;height:7.4px;border-radius:50%;background:#f2f5f7"></div>
<svg class="abs" style="left:785.3px;top:346.0px" width="3.5" height="4.5" viewBox="0 0 3.5 4.5"><path d="M0.9 0.6 L2.6 2.25 L0.9 3.9" stroke="#1f3442" stroke-width="0.85" fill="none"/></svg>
<div class="abs" style="left:726px;top:357.8px;width:6.6px;height:6.4px;background:#fff;border:0.6px solid #d3dbe0;border-radius:1px"></div>
<div class="t" style="left:735.2px;top:359.2px;font-size:4.4px;color:#3a4e5b;-webkit-text-stroke:0">Prospects</div>
<div class="abs" style="left:783px;top:357.4px;width:7.4px;height:7.4px;border-radius:50%;background:#f2f5f7"></div>
<svg class="abs" style="left:785.3px;top:359.0px" width="3.5" height="4.5" viewBox="0 0 3.5 4.5"><path d="M0.9 0.6 L2.6 2.25 L0.9 3.9" stroke="#1f3442" stroke-width="0.85" fill="none"/></svg>
<div class="abs" style="left:726px;top:370.8px;width:6.6px;height:6.4px;background:#fff;border:0.6px solid #d3dbe0;border-radius:1px"></div>
<div class="t" style="left:735.2px;top:372.2px;font-size:4.4px;color:#3a4e5b;-webkit-text-stroke:0">Lower48 Plays</div>
<div class="t" style="left:765.5px;top:372.6px;font-size:3.9px;color:#7f8e98;-webkit-text-stroke:0">Filtered</div>
<div class="abs" style="left:783px;top:370.4px;width:7.4px;height:7.4px;border-radius:50%;background:#f2f5f7"></div>
<svg class="abs" style="left:785.3px;top:372.0px" width="3.5" height="4.5" viewBox="0 0 3.5 4.5"><path d="M0.9 0.6 L2.6 2.25 L0.9 3.9" stroke="#1f3442" stroke-width="0.85" fill="none"/></svg>
<div class="abs" style="left:726px;top:383.6px;width:6.6px;height:6.4px;background:#0a63a8;border-radius:1px"></div>
<svg class="abs" style="left:726px;top:383.6px" width="6.6" height="6.4" viewBox="0 0 6.6 6.4"><path d="M1.6 3.3 L2.8 4.5 L5 2" stroke="#fff" stroke-width="0.8" fill="none"/></svg>
<div class="t" style="left:735.2px;top:385.0px;font-size:4.4px;color:#3a4e5b;-webkit-text-stroke:0">Fields</div>
<div class="t" style="left:765.5px;top:385.4px;font-size:3.9px;color:#7f8e98;-webkit-text-stroke:0">Filtered</div>
<div class="abs" style="left:783px;top:383.2px;width:7.4px;height:7.4px;border-radius:50%;background:#f2f5f7"></div>
<svg class="abs" style="left:785.3px;top:384.8px" width="3.5" height="4.5" viewBox="0 0 3.5 4.5"><path d="M0.9 0.6 L2.6 2.25 L0.9 3.9" stroke="#1f3442" stroke-width="0.85" fill="none"/></svg>
<div class="abs" style="left:726px;top:396.6px;width:6.6px;height:6.4px;background:#0a63a8;border-radius:1px"></div>
<svg class="abs" style="left:726px;top:396.6px" width="6.6" height="6.4" viewBox="0 0 6.6 6.4"><path d="M1.6 3.3 L2.8 4.5 L5 2" stroke="#fff" stroke-width="0.8" fill="none"/></svg>
<div class="t" style="left:735.2px;top:398.0px;font-size:4.4px;color:#3a4e5b;-webkit-text-stroke:0">Blocks</div>
<div class="t" style="left:765.5px;top:398.4px;font-size:3.9px;color:#7f8e98;-webkit-text-stroke:0">Filtered</div>
<div class="abs" style="left:783px;top:396.2px;width:7.4px;height:7.4px;border-radius:50%;background:#f2f5f7"></div>
<svg class="abs" style="left:785.3px;top:397.8px" width="3.5" height="4.5" viewBox="0 0 3.5 4.5"><path d="M0.9 0.6 L2.6 2.25 L0.9 3.9" stroke="#1f3442" stroke-width="0.85" fill="none"/></svg>
<div class="abs" style="left:726px;top:409.6px;width:6.6px;height:6.4px;background:#fff;border:0.6px solid #d3dbe0;border-radius:1px"></div>
<div class="t" style="left:735.2px;top:411.0px;font-size:4.3px;color:#3a4e5b;-webkit-text-stroke:0">Conventional Plays</div>
<div class="abs" style="left:783px;top:409.2px;width:7.4px;height:7.4px;border-radius:50%;background:#f2f5f7"></div>
<svg class="abs" style="left:785.3px;top:410.8px" width="3.5" height="4.5" viewBox="0 0 3.5 4.5"><path d="M0.9 0.6 L2.6 2.25 L0.9 3.9" stroke="#1f3442" stroke-width="0.85" fill="none"/></svg>
<div class="abs" style="left:726px;top:422.6px;width:6.6px;height:6.4px;background:#fff;border:0.6px solid #d3dbe0;border-radius:1px"></div>
<div class="t" style="left:735.2px;top:424.0px;font-size:4.4px;color:#3a4e5b;-webkit-text-stroke:0">Basins</div>
<div class="abs" style="left:783px;top:422.2px;width:7.4px;height:7.4px;border-radius:50%;background:#f2f5f7"></div>
<svg class="abs" style="left:785.3px;top:423.8px" width="3.5" height="4.5" viewBox="0 0 3.5 4.5"><path d="M0.9 0.6 L2.6 2.25 L0.9 3.9" stroke="#1f3442" stroke-width="0.85" fill="none"/></svg>
<div class="t" style="left:726px;top:437.0px;font-size:4.3px;color:#3a4e5b;-webkit-text-stroke:0">Basemap</div>
<div class="abs" style="left:783.5px;top:434.8px;width:7.4px;height:7.4px;border-radius:50%;background:#f2f5f7"></div>
<svg class="abs" style="left:785.8px;top:436.4px" width="3.5" height="4.5" viewBox="0 0 3.5 4.5"><path d="M0.9 0.6 L2.6 2.25 L0.9 3.9" stroke="#1f3442" stroke-width="0.85" fill="none"/></svg>
</div>
<div id="hdr">
  <div class="abs" style="left:7px;top:3px;width:528px;height:12.5px;border:0.8px solid #d9e2e8;border-radius:6.5px;background:#fff"></div>
  <svg class="abs" style="left:13px;top:6px" width="7" height="7" viewBox="0 0 7 7"><circle cx="2.9" cy="2.9" r="2.1" stroke="#1f3645" stroke-width="0.95" fill="none"/><path d="M4.5 4.5 L6.2 6.2" stroke="#1f3645" stroke-width="1.1" stroke-linecap="round"/></svg>
  <div class="t" style="left:21px;top:7.60px;font-size:4.7px;color:#8996a0">Search</div>

  <div class="abs" style="left:541px;top:3px;width:45px;height:12.5px;border-radius:6.5px;background:#eef2f4"></div>
  <svg class="abs" style="left:545.5px;top:5.5px" width="8" height="7" viewBox="0 0 8 7"><path d="M1.8 6 H6.3 Q7.5 6 7.5 4.7 Q7.5 3.5 6.2 3.4 Q6 1.2 4 1.2 Q2.4 1.2 2 2.8 Q0.5 3 0.5 4.5 Q0.5 6 1.8 6Z" stroke="#3b4e5a" stroke-width="0.75" fill="none"/></svg>
  <div class="t" style="left:556px;top:6.6px;font-size:5.0px;color:#34495a">Spaces</div>
  <svg class="abs" style="left:577px;top:8.5px" width="3" height="2" viewBox="0 0 3 2"><path d="M0.3 0.3 L1.5 1.6 L2.7 0.3Z" fill="#34495a"/></svg>

  <div class="abs" style="left:591px;top:3px;width:17px;height:12.5px;border-radius:6.5px;background:#eef2f4"></div>
  <svg class="abs" style="left:596px;top:6px" width="7" height="7" viewBox="0 0 7 7"><circle cx="5.3" cy="1.5" r="1.1" fill="#3b4e5a"/><circle cx="1.5" cy="3.5" r="1.1" fill="#3b4e5a"/><circle cx="5.3" cy="5.5" r="1.1" fill="#3b4e5a"/><path d="M5.3 1.5 L1.5 3.5 L5.3 5.5" stroke="#3b4e5a" stroke-width="0.6" fill="none"/></svg>

  <div class="abs" style="left:611px;top:3px;width:31.5px;height:12.5px;border-radius:6.5px;background:#0b8a1f"></div>
  <svg class="abs" style="left:615.5px;top:5.8px" width="7" height="7" viewBox="0 0 7 7"><rect x="0.5" y="0.5" width="6" height="6" rx="0.8" stroke="#fff" stroke-width="0.7" fill="none"/><rect x="2" y="0.6" width="3" height="2" stroke="#fff" stroke-width="0.6" fill="none"/><rect x="1.8" y="4" width="3.4" height="2.4" stroke="#fff" stroke-width="0.6" fill="none"/></svg>
  <div class="t" style="left:627px;top:7.50px;font-size:4.7px;font-weight:bold;color:#fff">Save</div>

  <div class="abs" style="left:646px;top:3px;width:11.5px;height:12.5px;border-radius:6px;background:#f1f4f6"></div>
  <svg class="abs" style="left:648px;top:5px" width="8" height="8" viewBox="0 0 8 8"><circle cx="4" cy="4" r="3" stroke="#3b4e5a" stroke-width="0.7" fill="none"/><path d="M4 3.5 V5.8" stroke="#3b4e5a" stroke-width="0.8"/><circle cx="4" cy="2.4" r="0.45" fill="#3b4e5a"/></svg>

  <div class="abs" style="left:661px;top:3px;width:55.5px;height:12.5px;border-radius:6.5px;background:#0b22f2"></div>
  <svg class="abs" style="left:666px;top:5.8px" width="7" height="7" viewBox="0 0 7 7"><path d="M1 6 L6 1" stroke="#fff" stroke-width="0.8"/><path d="M1.5 3 L2 2 L3 1.5 L2 1 L1.5 0 L1 1 L0 1.5 L1 2Z" fill="#fff"/><path d="M5.5 6.8 L5.9 5.9 L6.8 5.5 L5.9 5.1 L5.5 4.2 L5.1 5.1 L4.2 5.5 L5.1 5.9Z" fill="#fff"/></svg>
  <div class="t" style="left:676px;top:6.5px;font-size:5.2px;color:#fff">WoodMac Chat</div>

  <!-- filter row -->
  <svg class="abs" style="left:14px;top:28px" width="6" height="6" viewBox="0 0 6 6"><path d="M0.2 0.8 H2.2 M3.4 0.8 H5.8 M0.2 2.9 H1 M2.2 2.9 H5.8 M0.2 5 H3.6 M4.8 5 H5.8 M2.8 0 V1.6 M1.6 2.1 V3.7 M4.2 4.2 V5.8" stroke="#3b4e5a" stroke-width="0.7"/></svg>
  <div class="abs" style="left:24.5px;top:25px;width:36.5px;height:11.5px;border-radius:6px;background:#0b8a1f"></div>
  <div class="abs" style="left:27px;top:27.2px;width:7px;height:7px;border-radius:50%;background:#0a7419"></div>
  <svg class="abs" style="left:28px;top:28.2px" width="5" height="5" viewBox="0 0 5 5"><path d="M2.5 0.8 V4.2 M0.8 2.5 H4.2" stroke="#fff" stroke-width="0.7"/></svg>
  <div class="t" style="left:37px;top:29.80px;font-size:4.9px;font-weight:bold;color:#fff">Add filter</div>

  <div class="abs" style="left:64px;top:25px;width:59px;height:11.5px;border-radius:6px;background:#e9eef1"></div>
  <div class="t" style="left:69px;top:28.6px;font-size:4.4px;color:#4f6270">Industry</div>
  <div class="abs" style="left:87.5px;top:25px;width:35.5px;height:11.5px;border-radius:6px;background:#0866a6"></div>
  <div class="abs" style="left:88.5px;top:26px;width:9.5px;height:9.5px;border-radius:50%;background:#065a93"></div>
  <div class="t" style="left:92.4px;top:29.00px;font-size:4.6px;font-weight:bold;color:#fff">1</div>
  <div class="t" style="left:101px;top:28.6px;font-size:4.1px;font-weight:bold;color:#fff">Industry</div>

  <div class="abs" style="left:125.5px;top:25px;width:79.5px;height:11.5px;border-radius:6px;background:#e9eef1"></div>
  <div class="t" style="left:130px;top:29.10px;font-size:4.6px;color:#4f6270">Prospect: 43</div>
  <div class="abs" style="left:158.5px;top:25px;width:46.5px;height:11.5px;border-radius:6px;background:#0866a6"></div>
  <div class="abs" style="left:159.5px;top:26px;width:9.5px;height:9.5px;border-radius:50%;background:#065a93"></div>
  <div class="t" style="left:163.4px;top:29.00px;font-size:4.6px;font-weight:bold;color:#fff">1</div>
  <div class="t" style="left:172px;top:28.6px;font-size:4.25px;font-weight:bold;color:#fff">Prospect type</div>

  <div class="abs" style="left:208px;top:25px;width:59px;height:11.5px;border-radius:6px;background:#e9eef1"></div>
  <div class="t" style="left:213px;top:29.60px;font-size:4.5px;color:#4f6270">Location</div>
  <div class="abs" style="left:232.5px;top:25px;width:34.5px;height:11.5px;border-radius:6px;background:#0866a6"></div>
  <div class="abs" style="left:233.5px;top:26px;width:9.5px;height:9.5px;border-radius:50%;background:#065a93"></div>
  <div class="t" style="left:237.4px;top:29.00px;font-size:4.6px;font-weight:bold;color:#fff">1</div>
  <div class="t" style="left:246px;top:28.6px;font-size:3.95px;font-weight:bold;color:#fff">Country</div>

  <div class="abs" style="left:270px;top:24.5px;width:29px;height:12.5px;border-radius:6.5px;border:0.7px solid #dfe7ec;background:#fff"></div>
  <div class="t" style="left:275px;top:28.90px;font-size:5.1px;color:#b52b3f">Clear all</div>
</div>

</body></html>
